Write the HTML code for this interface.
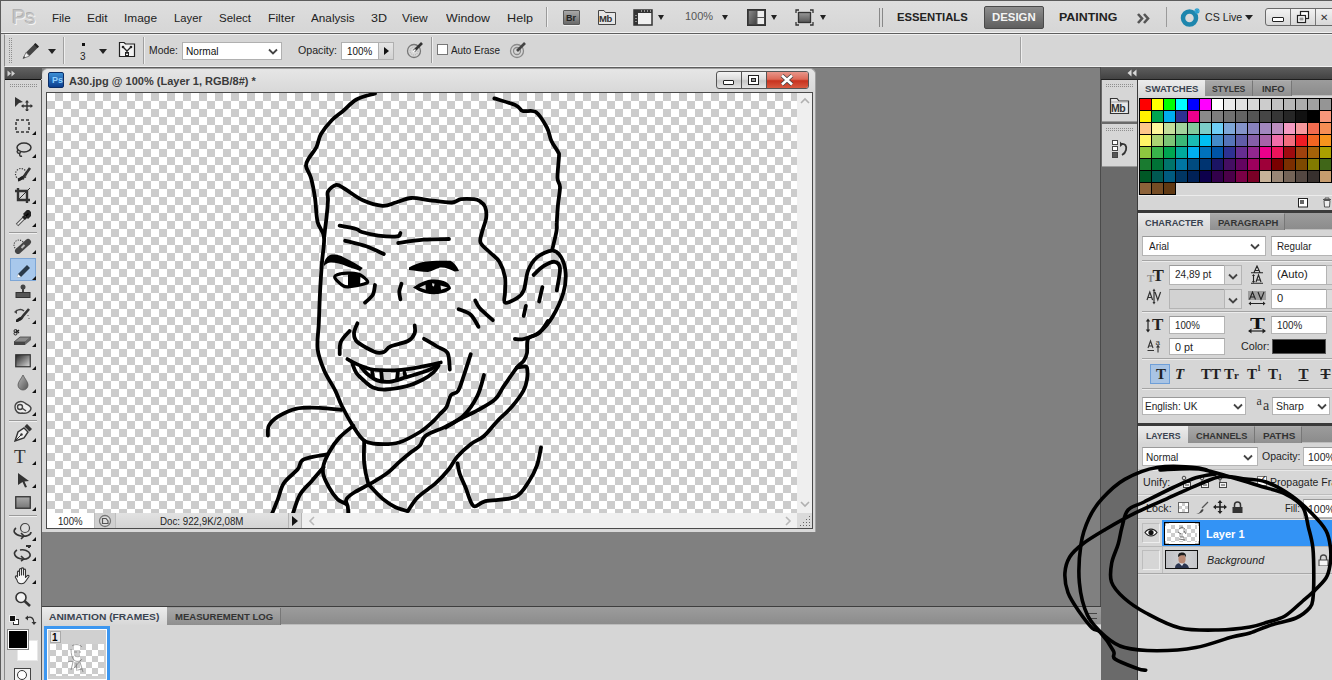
<!DOCTYPE html>
<html><head><meta charset="utf-8">
<style>
*{margin:0;padding:0;box-sizing:border-box}
html,body{width:1332px;height:680px;overflow:hidden;background:#d6d6d6;font-family:"Liberation Sans",sans-serif;color:#1e1e1e;position:relative}
.a{position:absolute}
.t{position:absolute;white-space:nowrap;font-size:11px;line-height:13px}
.b{font-weight:bold}
.chk{background:conic-gradient(#cccccc 0 25%,#ffffff 0 50%,#cccccc 0 75%,#ffffff 0) 0 0/16px 16px}
.inp{position:absolute;background:#fff;border:1px solid #a9a9a9;border-top-color:#8c8c8c}
.sep{position:absolute;background:#a8a8a8;width:1px}
.hsep{position:absolute;background:#a5a5a5;height:1px;border-bottom:1px solid #ececec;box-sizing:content-box}
.tab{position:absolute;font-weight:bold;font-size:10px;line-height:12px;white-space:nowrap;color:#3a3a3a}
</style></head><body>
<!-- frame -->
<div class="a" style="left:0;top:0;width:1332px;height:1px;background:#5c5c5c"></div>
<div class="a" style="left:0;top:0;width:1px;height:680px;background:#5c5c5c"></div>
<!-- menubar -->
<div class="a" id="menubar" style="left:1px;top:1px;width:1331px;height:32px;background:linear-gradient(#dedede,#d6d6d6);border-bottom:1px solid #f2f2f2"></div>
<div class="a" style="left:0;top:33px;width:1332px;height:1px;background:#5e5e5e"></div>
<!-- options bar -->
<div class="a" style="left:4px;top:34px;width:1328px;height:33px;background:#d6d6d6;border-left:1px solid #8a8a8a;border-top:1px solid #f0f0f0;border-bottom:1px solid #f0f0f0"></div>
<div class="a" style="left:0;top:67px;width:1332px;height:1px;background:#5e5e5e"></div>
<!-- workspace -->
<div class="a" id="ws" style="left:42px;top:68px;width:1059px;height:538px;background:#808080"></div>
<!-- toolbox -->
<div class="a" style="left:1px;top:67px;width:4px;height:613px;background:#d6d6d6"></div>
<div class="a" style="left:4px;top:67px;width:1px;height:613px;background:#8a8a8a"></div>
<div class="a" style="left:5px;top:67px;width:37px;height:12px;background:linear-gradient(#626262,#474747)"></div>
<div class="a" style="left:5px;top:79px;width:36px;height:601px;background:#d6d6d6;border-top:1px solid #111"></div>
<div class="a" style="left:41px;top:80px;width:1px;height:600px;background:#5a5a5a"></div>

<!-- document window -->
<div class="a" style="left:42px;top:68px;width:774px;height:464px;background:#d9d9d9;border-radius:6px 6px 0 0;border:1px solid #a0a0a0;border-bottom:none;border-left:none"></div>
<div class="a" style="left:43px;top:69px;width:772px;height:23px;background:linear-gradient(#e6e6e6,#d8d8d8);border-radius:6px 6px 0 0"></div>
<div class="a" style="left:48px;top:72px;width:16px;height:16px;background:linear-gradient(#3c8fd6,#0a3d8f);border-radius:2px;border:1px solid #0b2d66"></div>
<div class="t b" style="left:52px;top:74px;font-size:9px;color:#8fd0ff">Ps</div>
<div class="t b" id="title" style="left:69px;top:75px;font-size:11px;color:#3a3a3a">A30.jpg @ 100% (Layer 1, RGB/8#) *</div>
<div class="a" style="left:46px;top:92px;width:767px;height:437px;border:1px solid #4a4a4a;background:#f0f0f0"></div>
<div class="a chk" style="left:47px;top:93px;width:750px;height:420px"></div>
<!-- status bar -->
<div class="a" style="left:47px;top:513px;width:47px;height:15px;background:#fff"></div>

<div class="a" style="left:94px;top:513px;width:22px;height:15px;background:#d0d0d0;border-left:1px solid #bdbdbd;border-right:1px solid #bdbdbd"></div>
<div class="a" style="left:116px;top:513px;width:172px;height:15px;background:linear-gradient(#e2e2e2,#d4d4d4)"></div>

<div class="a" style="left:288px;top:513px;width:14px;height:15px;background:#d8d8d8;border-left:1px solid #b5b5b5;border-right:1px solid #b5b5b5"></div>
<div class="a" style="left:292px;top:516px;width:0;height:0;border-left:6px solid #111;border-top:5px solid transparent;border-bottom:5px solid transparent"></div>
<div class="a" style="left:797px;top:93px;width:15px;height:420px;background:#efefef"></div>
<div class="a" style="left:797px;top:513px;width:15px;height:15px;background:#dadada"></div>
<div class="t" style="left:12px;top:5px;font-size:21px;color:#c2c2c2;line-height:24px;letter-spacing:-1px;text-shadow:1px 1px 0 #f4f4f4,-1px -1px 0 #b0b0b0">Ps</div>
<div class="t" style="left:52px;top:12px;font-size:11.5px;line-height:13px;transform-origin:0 0;transform:scaleX(1.0037);color:#222">File</div>
<div class="t" style="left:86.5px;top:12px;font-size:11.5px;line-height:13px;transform-origin:0 0;transform:scaleX(1.0389);color:#222">Edit</div>
<div class="t" style="left:123.5px;top:12px;font-size:11.5px;line-height:13px;transform-origin:0 0;transform:scaleX(1.0323);color:#222">Image</div>
<div class="t" style="left:174px;top:12px;font-size:11.5px;line-height:13px;transform-origin:0 0;transform:scaleX(0.9798);color:#222">Layer</div>
<div class="t" style="left:218.5px;top:12px;font-size:11.5px;line-height:13px;transform-origin:0 0;transform:scaleX(1.0010);color:#222">Select</div>
<div class="t" style="left:267.5px;top:12px;font-size:11.5px;line-height:13px;transform-origin:0 0;transform:scaleX(1.0562);color:#222">Filter</div>
<div class="t" style="left:310.5px;top:12px;font-size:11.5px;line-height:13px;transform-origin:0 0;transform:scaleX(1.0204);color:#222">Analysis</div>
<div class="t" style="left:370.5px;top:12px;font-size:11.5px;line-height:13px;transform-origin:0 0;transform:scaleX(1.0882);color:#222">3D</div>
<div class="t" style="left:402px;top:12px;font-size:11.5px;line-height:13px;transform-origin:0 0;transform:scaleX(1.0397);color:#222">View</div>
<div class="t" style="left:445.5px;top:12px;font-size:11.5px;line-height:13px;transform-origin:0 0;transform:scaleX(1.0756);color:#222">Window</div>
<div class="t" style="left:506.5px;top:12px;font-size:11.5px;line-height:13px;transform-origin:0 0;transform:scaleX(1.0991);color:#222">Help</div>
<div class="a" style="left:546px;top:7px;width:1px;height:20px;background:#9a9a9a;border-right:1px solid #f0f0f0;box-sizing:content-box"></div>
<div class="a" style="left:563px;top:10px;width:17px;height:15px;background:linear-gradient(#a8a8a8,#6a6a6a);border:1px solid #5a5a5a;border-radius:1px;box-shadow:0 1px 0 #f0f0f0"></div>
<div class="t" style="left:566px;top:12px;font-size:9px;color:#222;font-weight:bold">Br</div>
<svg class="a" style="left:597px;top:8px" width="20" height="18"><path d="M1.5 16.5V2.5H7L8.5 4.5H18.5V16.5Z" fill="#e6e6e6" stroke="#444" stroke-width="1"/></svg>
<div class="t" style="left:599px;top:12px;font-size:9.5px;color:#333;font-weight:bold;letter-spacing:-0.5px">Mb</div>
<svg class="a" style="left:633px;top:9px" width="20" height="17"><rect x="1" y="1" width="18" height="15" fill="#f0f0f0" stroke="#333" stroke-width="1.5"/><rect x="1" y="1" width="18" height="3" fill="#333"/><rect x="1" y="1" width="4" height="15" fill="#333"/><path d="M3 6v1M3 9v1M3 12v1M8 2h1M11 2h1M14 2h1M17 2h1" stroke="#eee" stroke-width="1"/></svg>
<div class="a" style="left:658px;top:15px;width:0;height:0;border-top:5px solid #222;border-left:3.5px solid transparent;border-right:3.5px solid transparent"></div>
<div class="t" style="left:685px;top:10px;font-size:11px;color:#555;">100%</div>
<div class="a" style="left:722px;top:15px;width:0;height:0;border-top:5px solid #222;border-left:3.5px solid transparent;border-right:3.5px solid transparent"></div>
<svg class="a" style="left:747px;top:9px" width="19" height="17"><rect x="0.75" y="0.75" width="17.5" height="15.5" fill="#555" stroke="#333" stroke-width="1.5"/><rect x="2" y="2" width="7" height="13" fill="url(#gg)"/><rect x="10.5" y="2" width="6.5" height="6" fill="#eee"/><rect x="10.5" y="9" width="6.5" height="6" fill="#eee"/><defs><linearGradient id="gg" x1="0" y1="0" x2="1" y2="1"><stop offset="0" stop-color="#888"/><stop offset="1" stop-color="#444"/></linearGradient></defs></svg>
<div class="a" style="left:771px;top:15px;width:0;height:0;border-top:5px solid #222;border-left:3.5px solid transparent;border-right:3.5px solid transparent"></div>
<svg class="a" style="left:795px;top:9px" width="19" height="17"><path d="M1 4V1H4M15 1H18V4M18 13V16H15M4 16H1V13" fill="none" stroke="#333" stroke-width="1.3"/><rect x="3.5" y="3.5" width="12" height="10" fill="url(#g2)" stroke="#333" stroke-width="1.3"/><defs><linearGradient id="g2" x1="0" y1="0" x2="0" y2="1"><stop offset="0" stop-color="#999"/><stop offset="1" stop-color="#555"/></linearGradient></defs></svg>
<div class="a" style="left:820px;top:15px;width:0;height:0;border-top:5px solid #222;border-left:3.5px solid transparent;border-right:3.5px solid transparent"></div>
<div class="a" style="left:879px;top:8px;width:1px;height:19px;background:#888"></div>
<div class="a" style="left:882px;top:8px;width:1px;height:19px;background:#888"></div>
<div class="t" style="left:897px;top:11px;font-size:11px;font-weight:bold;line-height:13px;transform-origin:0 0;transform:scaleX(1.0235);color:#222">ESSENTIALS</div>
<div class="a" style="left:984px;top:6px;width:60px;height:23px;background:linear-gradient(#8e8e8e,#5e5e5e);border:1px solid #4a4a4a;border-radius:2px"></div>
<div class="t" style="left:992px;top:11px;font-size:11px;font-weight:bold;line-height:13px;transform-origin:0 0;transform:scaleX(1.0359);color:#f4f4f4">DESIGN</div>
<div class="t" style="left:1059px;top:11px;font-size:11px;font-weight:bold;line-height:13px;transform-origin:0 0;transform:scaleX(1.1266);color:#222">PAINTING</div>
<svg class="a" style="left:1137px;top:13px" width="15" height="11"><path d="M1 1L5 5.5L1 10M7 1L11 5.5L7 10" fill="none" stroke="#555" stroke-width="2.6"/></svg>
<div class="a" style="left:1166px;top:7px;width:1px;height:20px;background:#9a9a9a"></div>
<svg class="a" style="left:1180px;top:7px" width="22" height="20"><circle cx="9.5" cy="11" r="6.5" fill="none" stroke="#1e86ad" stroke-width="4.5"/><path d="M17 1V7M14 4H20M15 2L19 6M19 2L15 6" stroke="#2aa0d0" stroke-width="1.2"/></svg>
<div class="t" style="left:1205px;top:11px;font-size:11px;line-height:13px;transform-origin:0 0;transform:scaleX(0.9680);color:#222">CS Live</div>
<div class="a" style="left:1245px;top:15px;width:0;height:0;border-top:5px solid #222;border-left:4.0px solid transparent;border-right:4.0px solid transparent"></div>
<div class="a" style="left:1265px;top:8px;width:80px;height:18px;background:linear-gradient(#f2f2f2,#d8d8d8);border:1px solid #6a6a6a;border-radius:3px"></div>
<div class="a" style="left:1290px;top:9px;width:1px;height:16px;background:#777"></div>
<div class="a" style="left:1315px;top:9px;width:1px;height:16px;background:#777"></div>
<div class="a" style="left:1272px;top:17px;width:12px;height:5px;background:#fff;border:1px solid #222;border-radius:1px"></div>
<svg class="a" style="left:1296px;top:10px" width="14" height="14"><rect x="4.5" y="1.5" width="8" height="7" fill="#fff" stroke="#222" stroke-width="1.2"/><rect x="1.5" y="5.5" width="8" height="7" fill="#fff" stroke="#222" stroke-width="1.2"/><rect x="3.5" y="7.5" width="4" height="3" fill="#999"/></svg>
<div class="t" style="left:1320px;top:11px;font-size:10px;color:#333;">&#x2715;</div><svg class="a" style="left:9px;top:38px" width="4" height="25" fill="#8e8e8e" shape-rendering="crispEdges"><rect x="0" y="0" width="1" height="1"/><rect x="2" y="0" width="1" height="1"/><rect x="0" y="2" width="1" height="1"/><rect x="2" y="2" width="1" height="1"/><rect x="0" y="4" width="1" height="1"/><rect x="2" y="4" width="1" height="1"/><rect x="0" y="6" width="1" height="1"/><rect x="2" y="6" width="1" height="1"/><rect x="0" y="8" width="1" height="1"/><rect x="2" y="8" width="1" height="1"/><rect x="0" y="10" width="1" height="1"/><rect x="2" y="10" width="1" height="1"/><rect x="0" y="12" width="1" height="1"/><rect x="2" y="12" width="1" height="1"/><rect x="0" y="14" width="1" height="1"/><rect x="2" y="14" width="1" height="1"/><rect x="0" y="16" width="1" height="1"/><rect x="2" y="16" width="1" height="1"/><rect x="0" y="18" width="1" height="1"/><rect x="2" y="18" width="1" height="1"/><rect x="0" y="20" width="1" height="1"/><rect x="2" y="20" width="1" height="1"/><rect x="0" y="22" width="1" height="1"/><rect x="2" y="22" width="1" height="1"/><rect x="0" y="24" width="1" height="1"/><rect x="2" y="24" width="1" height="1"/></svg>
<svg class="a" style="left:21px;top:41px" width="19" height="18"><path d="M5 11.5 L14 2.5 L17.5 6 L8.5 15 Z" fill="#444"/><path d="M13 3.5 L14.5 2 L18 5.5 L16.5 7Z" fill="#222"/><path d="M5 11.5 L8.5 15 L2 17.5Z" fill="#f2f2f2" stroke="#666" stroke-width="0.8"/><path d="M2 17.5L3 15L4.5 16.5Z" fill="#444"/></svg>
<div class="a" style="left:48px;top:49px;width:0;height:0;border-top:5px solid #222;border-left:4.0px solid transparent;border-right:4.0px solid transparent"></div>
<div class="a" style="left:63px;top:37px;width:1px;height:27px;background:#a0a0a0;border-right:1px solid #eee;box-sizing:content-box"></div>
<div class="a" style="left:82px;top:43px;width:3px;height:3px;background:#111"></div>
<div class="t" style="left:80px;top:50px;font-size:10px;color:#222;">3</div>
<div class="a" style="left:99px;top:49px;width:0;height:0;border-top:5px solid #222;border-left:4.0px solid transparent;border-right:4.0px solid transparent"></div>
<svg class="a" style="left:118px;top:41px" width="18" height="17"><path d="M1.5 15.5V1.5H6L7.5 3H16.5V15.5Z" fill="#f2f2f2" stroke="#222" stroke-width="1.2"/><path d="M5 6L9 10L13 6M9 10V13" fill="none" stroke="#222" stroke-width="1.3"/><circle cx="5" cy="6" r="1.3" fill="#222"/><circle cx="13" cy="6" r="1.3" fill="#222"/><rect x="7.5" y="11.5" width="3" height="3" fill="none" stroke="#222"/></svg>
<div class="a" style="left:143px;top:37px;width:1px;height:27px;background:#a0a0a0;border-right:1px solid #eee;box-sizing:content-box"></div>
<div class="t" style="left:149px;top:44px;font-size:10.5px;line-height:13px;transform-origin:0 0;transform:scaleX(0.9867);color:#222">Mode:</div>
<div class="a" style="left:182px;top:42px;width:100px;height:18px;background:#fff;border:1px solid #b0b0b0"></div>
<div class="t" style="left:186px;top:45px;font-size:10.5px;line-height:13px;transform-origin:0 0;transform:scaleX(0.9633);color:#111">Normal</div>
<svg class="a" style="left:268px;top:48px" width="10" height="7"><path d="M1 1.5L5 5.5L9 1.5" fill="none" stroke="#444" stroke-width="1.8"/></svg>
<div class="t" style="left:297.5px;top:44px;font-size:10.5px;line-height:13px;transform-origin:0 0;transform:scaleX(1.0126);color:#222">Opacity:</div>
<div class="a" style="left:341px;top:42px;width:38px;height:18px;background:#fff;border:1px solid #b0b0b0"></div>
<div class="t" style="left:347px;top:45px;font-size:10.5px;line-height:13px;transform-origin:0 0;transform:scaleX(0.9382);color:#111">100%</div>
<div class="a" style="left:378px;top:42px;width:16px;height:18px;background:linear-gradient(#e6e6e6,#d2d2d2);border:1px solid #b0b0b0"></div>
<div class="a" style="left:384px;top:47px;width:0;height:0;border-left:5px solid #111;border-top:4px solid transparent;border-bottom:4px solid transparent"></div>
<svg class="a" style="left:406px;top:41px" width="20" height="18"><circle cx="8" cy="10" r="6.5" fill="#d8d8d8" stroke="#777" stroke-width="1.3"/><circle cx="8" cy="10" r="4" fill="none" stroke="#aaa" stroke-width="1" stroke-dasharray="1 1"/><path d="M8 10L16 2" stroke="#333" stroke-width="2.6"/><path d="M7 11L9.5 8.5" stroke="#fff" stroke-width="1.5"/></svg>
<div class="a" style="left:431px;top:37px;width:1px;height:26px;background:#9a9a9a;border-right:1px solid #eee;box-sizing:content-box"></div>
<div class="a" style="left:437px;top:44px;width:11px;height:11px;background:#fff;border:1px solid #777"></div>
<div class="t" style="left:451px;top:44px;font-size:10.5px;line-height:13px;transform-origin:0 0;transform:scaleX(0.9432);color:#222">Auto Erase</div>
<svg class="a" style="left:509px;top:41px" width="20" height="18"><circle cx="8" cy="10" r="6.5" fill="none" stroke="#8a8a8a" stroke-width="1.3"/><circle cx="8" cy="10" r="3.5" fill="none" stroke="#8a8a8a" stroke-width="1.3"/><path d="M8 10L16 2" stroke="#444" stroke-width="2.6"/></svg>
<div class="a" style="left:1020px;top:37px;width:1px;height:26px;background:#a0a0a0;border-right:1px solid #eee;box-sizing:content-box"></div><div class="a" style="left:12px;top:70px;width:12px;height:7px;background:none"></div>
<svg class="a" style="left:7px;top:70px" width="10" height="7"><path d="M0.5 0.5L4 3.5L0.5 6.5ZM4.5 0.5L8 3.5L4.5 6.5Z" fill="#d0d0d0"/></svg>
<svg class="a" style="left:10px;top:84px" width="28" height="4" fill="#8e8e8e" shape-rendering="crispEdges"><rect x="0" y="0" width="1" height="1"/><rect x="0" y="2" width="1" height="1"/><rect x="2" y="0" width="1" height="1"/><rect x="2" y="2" width="1" height="1"/><rect x="4" y="0" width="1" height="1"/><rect x="4" y="2" width="1" height="1"/><rect x="6" y="0" width="1" height="1"/><rect x="6" y="2" width="1" height="1"/><rect x="8" y="0" width="1" height="1"/><rect x="8" y="2" width="1" height="1"/><rect x="10" y="0" width="1" height="1"/><rect x="10" y="2" width="1" height="1"/><rect x="12" y="0" width="1" height="1"/><rect x="12" y="2" width="1" height="1"/><rect x="14" y="0" width="1" height="1"/><rect x="14" y="2" width="1" height="1"/><rect x="16" y="0" width="1" height="1"/><rect x="16" y="2" width="1" height="1"/><rect x="18" y="0" width="1" height="1"/><rect x="18" y="2" width="1" height="1"/><rect x="20" y="0" width="1" height="1"/><rect x="20" y="2" width="1" height="1"/><rect x="22" y="0" width="1" height="1"/><rect x="22" y="2" width="1" height="1"/><rect x="24" y="0" width="1" height="1"/><rect x="24" y="2" width="1" height="1"/><rect x="26" y="0" width="1" height="1"/><rect x="26" y="2" width="1" height="1"/></svg>
<svg class="a" style="left:14px;top:96px" width="19" height="15"><path d="M1 1L9 6L5 7L1 11Z" fill="#333"/><path d="M13 5V15M8 10H18" stroke="#333" stroke-width="1.4"/><path d="M13 4L11 6.5H15ZM13 16L11 13.5H15ZM7 10L9.5 8V12ZM19 10L16.5 8V12Z" fill="#333"/></svg>
<svg class="a" style="left:15px;top:119px" width="16" height="15"><rect x="1" y="1" width="13" height="12" fill="none" stroke="#333" stroke-width="1.5" stroke-dasharray="3 2"/></svg>
<div class="a" style="left:32px;top:131px;width:0;height:0;border-bottom:4px solid #111;border-left:4px solid transparent"></div>
<svg class="a" style="left:14px;top:141px" width="18" height="17"><ellipse cx="10" cy="6.5" rx="7" ry="4.5" fill="none" stroke="#333" stroke-width="1.5"/><path d="M4 9C2 11 4 13 6 12C5 14 6 16 8 15" fill="none" stroke="#333" stroke-width="1.4"/></svg>
<div class="a" style="left:32px;top:154px;width:0;height:0;border-bottom:4px solid #111;border-left:4px solid transparent"></div>
<svg class="a" style="left:14px;top:165px" width="18" height="17"><circle cx="7" cy="9" r="5.5" fill="none" stroke="#333" stroke-width="1.2" stroke-dasharray="1.3 1.3"/><path d="M6 14C8 14 10 12 11 10L16 3" stroke="#333" stroke-width="2.6"/><path d="M4 15C6 15 7 13 9 12" stroke="#222" stroke-width="3"/></svg>
<div class="a" style="left:32px;top:177px;width:0;height:0;border-bottom:4px solid #111;border-left:4px solid transparent"></div>
<svg class="a" style="left:14px;top:187px" width="18" height="17"><path d="M4 1V13H16M1 4H13V16" fill="none" stroke="#333" stroke-width="2.4"/><path d="M5 12L16 1" stroke="#333" stroke-width="1"/></svg>
<div class="a" style="left:32px;top:200px;width:0;height:0;border-bottom:4px solid #111;border-left:4px solid transparent"></div>
<svg class="a" style="left:15px;top:210px" width="16" height="17"><path d="M2 15L9 8" stroke="#555" stroke-width="3.5"/><path d="M2.5 14.5L8.5 8.5" stroke="#eee" stroke-width="1.5"/><path d="M8 6L11 9M9 5L13 1L16 4L12 8" stroke="#222" stroke-width="3"/></svg>
<div class="a" style="left:32px;top:223px;width:0;height:0;border-bottom:4px solid #111;border-left:4px solid transparent"></div>
<div class="a" style="left:9px;top:232px;width:28px;height:1px;background:#9a9a9a;border-bottom:1px solid #f0f0f0;box-sizing:content-box"></div>
<svg class="a" style="left:13px;top:238px" width="20" height="16"><circle cx="6" cy="7" r="5" fill="none" stroke="#444" stroke-width="1.1" stroke-dasharray="1.2 1.2"/><path d="M5 13L15 4" stroke="#444" stroke-width="6" stroke-linecap="round"/><path d="M8.5 10L11.5 7" stroke="#bbb" stroke-width="2"/></svg>
<div class="a" style="left:32px;top:250px;width:0;height:0;border-bottom:4px solid #111;border-left:4px solid transparent"></div>
<div class="a" style="left:10px;top:258px;width:26px;height:23px;background:#a8c8ec;border:1px solid #7da6d6"></div>
<svg class="a" style="left:15px;top:261px" width="18" height="17"><path d="M3 13L12 4L15 7L6 16L2 16.5Z" fill="#2a3a4a"/><path d="M2 16.5L3 13L6 16Z" fill="#fff"/></svg>
<div class="a" style="left:32px;top:276px;width:0;height:0;border-bottom:4px solid #111;border-left:4px solid transparent"></div>
<svg class="a" style="left:14px;top:284px" width="18" height="15"><circle cx="9" cy="3" r="2.5" fill="#444"/><rect x="8" y="4" width="2" height="5" fill="#444"/><rect x="2" y="8.5" width="14" height="5" fill="#555" stroke="#333"/></svg>
<div class="a" style="left:32px;top:297px;width:0;height:0;border-bottom:4px solid #111;border-left:4px solid transparent"></div>
<svg class="a" style="left:13px;top:307px" width="20" height="15"><path d="M3 4C6 2 9 2 11 4" fill="none" stroke="#444" stroke-width="1.5"/><path d="M1 5L4 2.5V7Z" fill="#444"/><path d="M5 13C7 13 9 11 10 9L16 2" stroke="#333" stroke-width="2.6"/><path d="M3 14C5 14 6 12 8 11" stroke="#222" stroke-width="3"/><path d="M15 8V9M16 11V12" stroke="#555"/></svg>
<div class="a" style="left:32px;top:320px;width:0;height:0;border-bottom:4px solid #111;border-left:4px solid transparent"></div>
<svg class="a" style="left:13px;top:329px" width="20" height="17"><path d="M3 4L6 1M3 1L6 4" stroke="#222" stroke-width="1.2"/><circle cx="2.5" cy="2" r="1.5" fill="none" stroke="#222"/><circle cx="2.5" cy="4.5" r="1.5" fill="none" stroke="#222"/><path d="M1 13L7 8H18L12 13Z" fill="#8a8a8a" stroke="#444" stroke-width="0.8"/><path d="M1 13H12V16H1Z" fill="#444"/><path d="M12 13L18 8V11L12 16Z" fill="#666"/></svg>
<div class="a" style="left:32px;top:343px;width:0;height:0;border-bottom:4px solid #111;border-left:4px solid transparent"></div>
<svg class="a" style="left:15px;top:354px" width="16" height="14"><defs><linearGradient id="tg" x1="0" y1="0" x2="1" y2="1"><stop offset="0" stop-color="#222"/><stop offset="1" stop-color="#ddd"/></linearGradient></defs><rect x="0.75" y="0.75" width="14.5" height="12" fill="url(#tg)" stroke="#333" stroke-width="1.2"/></svg>
<div class="a" style="left:32px;top:366px;width:0;height:0;border-bottom:4px solid #111;border-left:4px solid transparent"></div>
<svg class="a" style="left:17px;top:374px" width="12" height="17"><defs><linearGradient id="td" x1="0" y1="0" x2="1" y2="1"><stop offset="0" stop-color="#bbb"/><stop offset="1" stop-color="#555"/></linearGradient></defs><path d="M6 1C4 5 1 8 1 11A5 5 0 0 0 11 11C11 8 8 5 6 1Z" fill="url(#td)" stroke="#555" stroke-width="0.8"/></svg>
<div class="a" style="left:32px;top:389px;width:0;height:0;border-bottom:4px solid #111;border-left:4px solid transparent"></div>
<svg class="a" style="left:13px;top:399px" width="20" height="17"><path d="M2 8C2 3 8 1 12 4C14 6 17 6 18 9C18 13 13 15 9 14C5 15 2 12 2 8Z" fill="#eee" stroke="#444" stroke-width="1.4"/><circle cx="7" cy="8" r="2.5" fill="none" stroke="#444" stroke-width="1.4"/><path d="M9 9L13 12" stroke="#444" stroke-width="1.4"/></svg>
<div class="a" style="left:32px;top:412px;width:0;height:0;border-bottom:4px solid #111;border-left:4px solid transparent"></div>
<div class="a" style="left:9px;top:420px;width:28px;height:1px;background:#9a9a9a;border-bottom:1px solid #f0f0f0;box-sizing:content-box"></div>
<svg class="a" style="left:14px;top:424px" width="18" height="18"><path d="M1 17L4 8L10 4L14 8L10 14Z" fill="#eee" stroke="#333" stroke-width="1.4"/><path d="M1 17L7 11" stroke="#333"/><circle cx="7.5" cy="10.5" r="1.2" fill="#333"/><path d="M11 3L13 1L17 5L15 7" fill="#333" stroke="#333" stroke-width="1.5"/></svg>
<div class="a" style="left:32px;top:438px;width:0;height:0;border-bottom:4px solid #111;border-left:4px solid transparent"></div>
<div class="t" style="left:14px;top:447px;font-family:'Liberation Serif',serif;font-size:19px;line-height:19px;color:#333">T</div>
<div class="a" style="left:32px;top:461px;width:0;height:0;border-bottom:4px solid #111;border-left:4px solid transparent"></div>
<svg class="a" style="left:17px;top:472px" width="13" height="16"><path d="M1 1L12 9L7.5 9.5L10 15L8 15.5L5.5 10L1 13Z" fill="#333"/></svg>
<div class="a" style="left:32px;top:484px;width:0;height:0;border-bottom:4px solid #111;border-left:4px solid transparent"></div>
<svg class="a" style="left:15px;top:496px" width="16" height="13"><defs><linearGradient id="tr" x1="0" y1="0" x2="0" y2="1"><stop offset="0" stop-color="#aaa"/><stop offset="1" stop-color="#777"/></linearGradient></defs><rect x="0.75" y="0.75" width="14.5" height="11.5" fill="url(#tr)" stroke="#333" stroke-width="1.3"/></svg>
<div class="a" style="left:32px;top:507px;width:0;height:0;border-bottom:4px solid #111;border-left:4px solid transparent"></div>
<div class="a" style="left:9px;top:515px;width:28px;height:1px;background:#9a9a9a;border-bottom:1px solid #f0f0f0;box-sizing:content-box"></div>
<svg class="a" style="left:12px;top:522px" width="22" height="19"><circle cx="13" cy="6" r="4.5" fill="#ddd" stroke="#444" stroke-width="1.2"/><path d="M4 6C0 9 3 13 9 14C14 15 19 13 19 10" fill="none" stroke="#333" stroke-width="1.6"/><path d="M9 11L12 14L9 17" fill="none" stroke="#333" stroke-width="1.6"/></svg>
<div class="a" style="left:32px;top:537px;width:0;height:0;border-bottom:4px solid #111;border-left:4px solid transparent"></div>
<svg class="a" style="left:12px;top:544px" width="22" height="18"><path d="M14 2H19M17 1V4" stroke="#333" stroke-width="2"/><path d="M5 6C0 9 3 14 10 15C15 16 19 13 18 10C17 7 12 5 8 6" fill="none" stroke="#333" stroke-width="1.6"/><path d="M9 12L12 15L9 17" fill="none" stroke="#333" stroke-width="1.6"/></svg>
<div class="a" style="left:32px;top:557px;width:0;height:0;border-bottom:4px solid #111;border-left:4px solid transparent"></div>
<svg class="a" style="left:13px;top:567px" width="20" height="18"><path d="M4.5 10V5C4.5 3.8 6.5 3.8 6.5 5V8.5V2.5C6.5 1.2 8.5 1.2 8.5 2.5V8V1.8C8.5 0.6 10.5 0.6 10.5 1.8V8V3C10.5 1.8 12.5 1.8 12.5 3V10.5L14 8.8C15 7.8 16.6 8.6 15.8 9.8L12.5 14.5C11.5 16 10.5 16.8 8.5 16.8C5.5 16.8 4.3 15 4 13L2.5 10.5C1.8 9.3 3.6 8.3 4.5 9.5Z" fill="#f6f6f6" stroke="#333" stroke-width="1.1" stroke-linejoin="round"/></svg>
<div class="a" style="left:32px;top:580px;width:0;height:0;border-bottom:4px solid #111;border-left:4px solid transparent"></div>
<svg class="a" style="left:14px;top:591px" width="18" height="16"><circle cx="7" cy="6.5" r="5" fill="#f2f2f2" stroke="#333" stroke-width="1.6"/><path d="M10.5 10L16 15" stroke="#333" stroke-width="2.6"/></svg>
<div class="a" style="left:13px;top:619px;width:6px;height:6px;background:#fff;border:1px solid #333"></div>
<div class="a" style="left:9px;top:615px;width:7px;height:7px;background:#111;border:1px solid #eee"></div>
<svg class="a" style="left:25px;top:614px" width="12" height="12"><path d="M2 4C6 2 9 4 9 9" fill="none" stroke="#333" stroke-width="1.3"/><path d="M0 4L3 1.5V6.5ZM9 11L6.5 8H11.5Z" fill="#333"/></svg>
<div class="a" style="left:17px;top:640px;width:21px;height:21px;background:#fff;border:1px solid #e8e8e8"></div>
<div class="a" style="left:8px;top:630px;width:20px;height:19px;background:#000;border:1px solid #fff;outline:1px solid #888"></div>
<div class="a" style="left:14px;top:668px;width:17px;height:13px;background:#f4f4f4;border:1px solid #444"></div>
<div class="a" style="left:17px;top:670px;width:10px;height:10px;border-radius:50%;border:1px solid #333;background:#fff"></div><div class="a" style="left:716px;top:71px;width:93px;height:18px;background:linear-gradient(#f4f4f4 0,#dcdcdc 45%,#c8c8c8 55%,#e4e4e4 100%);border:1px solid #555;border-radius:3px"></div>
<div class="a" style="left:766px;top:72px;width:42px;height:16px;background:linear-gradient(#e8968a 0,#dd6a58 45%,#c8321e 55%,#d85a40 100%);border-radius:0 2px 2px 0;border-left:1px solid #555"></div>
<div class="a" style="left:741px;top:72px;width:1px;height:16px;background:#555"></div>
<div class="a" style="left:723px;top:80px;width:11px;height:5px;background:#fff;border:1px solid #222;border-radius:1px"></div>
<div class="a" style="left:748px;top:75px;width:11px;height:10px;background:#fff;border:1px solid #222"></div>
<div class="a" style="left:751px;top:78px;width:5px;height:4px;background:#999;border:1px solid #222"></div>
<svg class="a" style="left:780px;top:74px" width="14" height="12"><path d="M2 1.5L12 10.5M12 1.5L2 10.5" stroke="#444" stroke-width="4.2"/><path d="M2 1.5L12 10.5M12 1.5L2 10.5" stroke="#fff" stroke-width="2.6"/></svg>
<svg class="a" style="left:800px;top:97px" width="10" height="7"><path d="M1 6L5 2L9 6" fill="none" stroke="#b0b0b0" stroke-width="1.6"/></svg>
<svg class="a" style="left:800px;top:501px" width="10" height="7"><path d="M1 1L5 5L9 1" fill="none" stroke="#b0b0b0" stroke-width="1.6"/></svg>
<svg class="a" style="left:308px;top:516px" width="7" height="10"><path d="M6 1L2 5L6 9" fill="none" stroke="#b8b8b8" stroke-width="1.6"/></svg>
<svg class="a" style="left:785px;top:516px" width="7" height="10"><path d="M1 1L5 5L1 9" fill="none" stroke="#b8b8b8" stroke-width="1.6"/></svg>
<div class="a" style="left:799px;top:515px;width:11px;height:11px;background-image:radial-gradient(#666 0.7px,transparent 0.9px);background-size:3px 3px;clip-path:polygon(100% 0,100% 100%,0 100%)"></div>
<div class="t" style="left:58px;top:515px;font-size:10.5px;line-height:13px;transform-origin:0 0;transform:scaleX(0.9159);color:#1e1e1e">100%</div>
<div class="t" style="left:160px;top:515px;font-size:10.5px;line-height:13px;transform-origin:0 0;transform:scaleX(0.9289);color:#1e1e1e">Doc: 922,9K/2,08M</div>
<svg class="a" style="left:98px;top:514px" width="14" height="14"><circle cx="7" cy="7" r="5.5" fill="#ddd" stroke="#777" stroke-width="1.3"/><path d="M4.5 4.5H8L10 7V9.5H4.5Z" fill="none" stroke="#555" stroke-width="1.2"/></svg>
<svg class="a" style="left:0;top:0" width="1332" height="680" viewBox="0 0 1332 680">
<defs><clipPath id="cv"><rect x="47" y="93" width="750" height="420"/></clipPath></defs>
<g clip-path="url(#cv)" fill="none" stroke="#000" stroke-width="3.8" stroke-linecap="round" stroke-linejoin="round">
<path d="M375.0 93.5 C371.9 94.5 361.8 96.6 356.5 99.5 C351.2 102.4 347.1 107.6 343.0 111.0 C338.9 114.4 335.7 116.2 332.0 120.0 C328.3 123.8 323.6 129.5 321.0 134.0 C318.4 138.5 318.5 143.0 316.5 147.0 C314.5 151.0 310.8 154.8 309.0 158.0 C307.2 161.2 305.7 162.7 306.0 166.0 C306.3 169.3 309.5 172.7 311.0 178.0 C312.5 183.3 313.9 190.7 315.0 198.0 C316.1 205.3 316.1 215.5 317.6 222.0 C319.1 228.5 323.3 230.3 324.0 237.0 C324.7 243.7 322.7 252.7 322.0 262.0 C321.3 271.3 320.5 282.8 320.0 293.0 C319.5 303.2 319.2 314.2 318.8 323.5 C318.4 332.8 316.7 341.1 317.6 349.0 C318.5 356.9 321.4 363.8 324.3 370.7 C327.2 377.6 332.4 384.7 335.3 390.6 C338.2 396.5 338.9 400.1 341.9 406.0 C344.8 411.9 349.3 420.2 353.0 426.0 C356.7 431.8 359.8 437.5 364.0 440.5 C368.2 443.5 372.2 443.7 378.0 444.0 C383.8 444.3 392.0 444.5 399.0 442.5 C406.0 440.5 414.3 435.5 420.0 432.0 C425.7 428.5 429.7 424.5 433.0 421.5 C436.3 418.5 437.8 416.4 440.0 414.0 C442.2 411.6 444.7 410.2 446.5 407.0 C448.3 403.8 449.1 397.7 451.0 395.0 C452.9 392.3 455.8 394.3 458.0 391.0 C460.2 387.7 461.9 381.1 464.0 375.0 C466.1 368.9 469.6 357.7 470.7 354.2"/>
<path d="M324.0 237.0 C324.4 233.8 325.8 223.8 326.5 217.6 C327.2 211.4 327.8 204.3 328.0 200.0 C328.2 195.7 326.6 194.0 328.0 191.5 C329.4 189.0 333.5 185.3 336.3 184.9 C339.1 184.5 340.6 186.4 345.0 189.0 C349.4 191.6 356.5 197.5 362.8 200.3 C369.1 203.1 377.2 205.4 382.7 205.8 C388.2 206.2 391.1 203.8 395.9 202.5 C400.7 201.2 405.6 198.4 411.3 198.0 C417.0 197.6 423.2 199.6 430.0 200.3 C436.8 201.1 446.9 202.7 452.0 202.5 C457.1 202.3 457.2 199.8 460.9 199.2 C464.6 198.6 470.9 198.9 474.0 199.2 C477.1 199.5 477.8 199.8 479.6 201.0 C481.4 202.2 483.9 203.8 485.0 206.6 C486.1 209.4 486.7 213.2 486.2 217.6 C485.7 222.0 482.7 228.8 481.8 233.0 C480.9 237.2 479.2 239.7 480.7 243.0 C482.2 246.3 487.5 249.9 490.6 253.0 C493.7 256.1 497.0 257.8 499.4 261.8 C501.8 265.8 504.1 272.1 505.0 277.2 C505.9 282.3 505.0 288.5 505.0 292.7 C505.0 296.9 503.0 301.7 505.0 302.6 C507.0 303.5 513.9 300.2 517.0 298.2 C520.1 296.2 521.9 295.0 523.7 290.4 C525.6 285.8 525.9 276.1 528.1 270.6 C530.3 265.1 533.0 260.7 537.0 257.4 C541.0 254.1 548.4 250.7 552.4 250.7 C556.4 250.7 559.0 253.7 561.2 257.4 C563.4 261.1 565.2 266.9 565.6 272.8 C566.0 278.7 565.6 285.4 563.4 292.7 C561.2 300.0 556.4 310.3 552.4 316.9 C548.4 323.5 543.9 328.7 539.1 332.4 C534.3 336.1 527.7 337.9 523.7 339.0 C519.7 340.1 516.4 339.0 514.9 339.0"/>
<path d="M494.4 98.4 C498.0 99.6 511.3 103.3 516.0 105.4 C520.7 107.5 519.4 109.9 522.7 111.0 C526.0 112.1 531.9 109.2 535.9 112.0 C539.9 114.8 544.3 122.7 546.9 127.5 C549.5 132.3 549.4 136.6 551.3 140.7 C553.1 144.8 556.7 149.2 558.0 151.8 C559.3 154.4 559.1 151.6 559.0 156.0 C558.9 160.4 557.3 172.8 557.5 178.0 C557.7 183.2 559.9 182.6 560.0 187.0 C560.1 191.4 558.5 198.8 558.0 204.7 C557.5 210.6 557.0 218.0 556.8 222.4 C556.5 226.8 557.2 226.6 556.5 231.0 C555.8 235.4 553.1 246.0 552.4 249.0"/>
<path d="M339.6 225.7 C342.4 226.2 352.5 227.9 356.2 229.0 C359.9 230.1 358.1 230.9 361.8 232.0 C365.5 233.1 372.3 234.9 378.2 235.6 C384.1 236.3 393.3 236.8 397.0 236.4 C400.7 236.0 399.8 233.6 400.4 233.0"/>
<path d="M345.2 240.8 C348.7 241.7 359.8 244.1 366.2 246.3 C372.6 248.5 380.9 252.7 383.8 254.0"/>
<path d="M398.2 243.0 C402.4 242.4 415.0 240.4 423.5 239.7 C432.0 239.0 444.8 239.1 449.0 239.0"/>
<path d="M375.0 285.0 C374.6 286.6 374.5 292.0 372.8 294.9 C371.1 297.8 366.3 301.3 365.0 302.6"/>
<path d="M401.5 283.8 C401.1 285.1 399.5 288.9 399.3 291.5 C399.1 294.1 400.2 298.0 400.4 299.3"/>
<path d="M357.4 323.3 C356.8 324.9 354.0 330.1 354.0 333.2 C354.0 336.3 353.9 338.9 357.4 342.0 C360.9 345.1 370.6 350.3 375.0 352.0 C379.4 353.7 381.2 352.9 383.8 352.0 C386.4 351.1 386.4 348.3 390.4 346.5 C394.4 344.7 403.9 343.2 408.0 341.0 C412.1 338.8 413.6 335.8 414.7 333.2 C415.8 330.6 414.7 326.8 414.7 325.5"/>
<path d="M349.6 331.0 C348.1 332.8 342.5 338.1 340.8 342.0 C339.1 345.9 339.9 352.2 339.7 354.2"/>
<path d="M424.0 338.8 C426.2 340.1 433.1 344.1 437.0 346.5 C440.9 348.9 445.5 349.1 447.6 353.0 C449.7 356.9 449.4 366.8 449.8 369.6"/>
<path d="M347.4 359.1 C348.9 359.9 352.8 362.4 356.5 364.0 C360.2 365.6 365.7 368.0 369.8 369.0 C373.9 370.0 376.6 370.0 381.3 370.2 C386.0 370.4 392.4 370.5 397.9 370.2 C403.4 369.9 408.9 369.1 414.4 368.2 C419.9 367.3 426.5 365.8 430.9 364.9 C435.3 363.9 439.1 362.9 440.8 362.5"/>
<path d="M352.4 364.0 C353.1 365.5 354.4 370.2 356.5 373.1 C358.6 376.0 362.1 379.0 364.8 381.4 C367.6 383.8 369.6 386.1 373.0 387.5 C376.4 388.9 380.0 389.7 385.5 389.5 C391.0 389.3 399.8 388.0 406.0 386.4 C412.2 384.8 418.0 382.1 422.6 379.8 C427.2 377.5 430.7 374.7 433.4 372.3 C436.1 369.9 437.7 366.6 438.6 365.5"/>
<path d="M360.7 366.5 C361.8 367.8 364.6 371.7 367.3 374.0 C370.1 376.3 373.5 379.1 377.2 380.4 C380.9 381.7 384.8 382.3 389.6 381.8 C394.4 381.3 400.5 378.9 406.0 377.3 C411.5 375.7 418.4 373.7 422.6 372.3 C426.8 370.9 428.4 370.2 431.0 369.0 C433.6 367.8 436.8 365.7 438.0 365.0"/>
<path d="M372.2 371.5 L373.0 377.3"/>
<path d="M381.3 372.3 L382.1 381.0"/>
<path d="M397.9 371.5 L397.0 379.8"/>
<path d="M404.5 372.3 L405.3 376.4"/>
<path d="M475.2 300.4 C475.9 301.7 476.7 304.7 479.6 308.0 C482.5 311.3 490.6 318.2 492.8 320.2"/>
<path d="M458.6 309.2 C460.6 310.1 467.4 311.8 470.7 314.7 C474.0 317.6 477.2 324.8 478.5 326.8"/>
<path d="M542.4 287.1 L539.1 301.5"/>
<path d="M525.9 305.9 L523.7 315.8"/>
<path d="M533.6 275.0 C535.2 273.5 540.0 268.4 543.5 266.2 C547.0 264.0 551.9 261.4 554.6 261.8 C557.4 262.2 559.6 263.6 560.0 268.4 C560.4 273.2 557.3 286.7 556.8 290.4"/>
<path d="M548.0 321.0 C546.5 323.0 542.4 330.2 539.1 333.2 C535.8 336.2 530.1 335.5 528.1 338.8 C526.1 342.1 527.7 349.3 527.0 353.0 C526.3 356.7 525.4 358.4 523.7 360.8 C522.0 363.2 520.3 363.2 517.0 367.4 C513.7 371.6 507.5 380.9 503.8 386.2 C500.1 391.5 499.4 395.4 495.0 399.4 C490.6 403.4 483.3 407.1 477.4 410.4 C471.5 413.7 465.0 416.4 459.7 419.3 C454.4 422.2 448.0 426.2 445.7 427.6"/>
<path d="M484.0 375.0 C482.9 378.5 480.8 389.1 477.4 395.9 C474.0 402.7 468.8 410.6 463.5 415.7 C458.2 420.8 452.0 423.3 445.7 426.6 C439.4 429.9 430.1 432.5 425.8 435.6 C421.5 438.8 422.2 442.9 419.9 445.5 C417.6 448.1 415.2 448.9 411.9 451.5 C408.6 454.1 404.1 457.8 400.0 461.4 C395.9 465.0 391.8 469.7 387.0 473.3 C382.2 476.9 376.5 480.1 371.2 483.2 C365.9 486.3 359.1 489.4 355.0 492.0 C350.9 494.6 347.9 497.0 346.5 499.0 C345.1 501.0 346.8 503.2 346.8 504.0"/>
<path d="M517.0 367.4 C518.2 367.2 522.3 366.4 524.0 366.5 C525.7 366.6 526.5 365.8 527.0 368.0 C527.5 370.2 527.6 375.7 527.0 379.5 C526.4 383.3 526.0 386.1 523.5 390.6 C521.0 395.1 516.4 401.4 512.0 406.5 C507.6 411.6 501.7 416.6 497.0 421.5 C492.3 426.4 488.3 432.2 484.0 436.0 C479.7 439.8 475.4 440.6 471.0 444.0 C466.6 447.4 461.0 452.5 457.3 456.7 C453.6 460.9 452.6 464.6 449.0 469.0 C445.4 473.4 440.9 478.5 435.7 483.2 C430.5 487.9 422.5 492.5 417.9 497.1 C413.3 501.7 409.6 508.7 407.9 511.0"/>
<path d="M457.6 463.4 C457.9 465.0 458.3 469.3 459.6 473.3 C460.9 477.3 463.2 481.8 465.5 487.2 C467.8 492.6 470.2 503.7 473.5 506.0 C476.8 508.3 478.5 502.6 485.4 501.1 C492.3 499.6 507.8 500.4 515.1 497.1 C522.4 493.8 525.4 486.5 529.0 481.2 C532.6 475.9 535.0 471.0 537.0 465.4 C539.0 459.8 540.3 450.5 541.0 447.5"/>
<path d="M267.9 435.6 C268.1 434.0 267.2 428.9 268.9 425.7 C270.6 422.5 273.4 419.5 277.9 416.7 C282.4 413.9 288.8 410.3 295.7 408.8 C302.6 407.3 312.0 407.6 319.6 407.8 C327.2 408.0 337.8 409.5 341.4 409.8"/>
<path d="M353.3 425.7 C351.0 427.7 343.4 433.3 339.4 437.6 C335.4 441.9 332.1 446.9 329.5 451.5 C326.9 456.1 324.5 461.4 323.5 465.4 C322.5 469.4 322.5 471.5 323.5 475.3 C324.5 479.1 327.2 484.2 329.5 488.2 C331.8 492.2 335.0 496.6 337.4 499.1 C339.8 501.6 342.3 501.9 344.0 503.0 C345.7 504.1 346.8 503.7 347.5 505.5 C348.2 507.3 348.2 512.6 348.3 514.0"/>
<path d="M327.5 454.4 C323.5 455.2 308.7 456.9 303.7 459.4 C298.7 461.9 301.0 465.3 297.7 469.3 C294.4 473.3 287.1 478.2 283.8 483.2 C280.5 488.2 279.9 494.0 277.9 499.1 C275.9 504.2 272.9 511.5 271.9 514.0"/>
<path d="M323.5 467.3 C321.5 469.6 315.6 476.6 311.6 481.2 C307.6 485.8 302.8 489.6 299.7 495.1 C296.6 500.6 293.9 510.9 292.8 514.0"/>
<path d="M364.2 441.0 C364.2 444.7 363.5 456.4 364.2 463.4 C364.9 470.4 367.0 479.2 368.2 483.2 C369.4 487.2 368.7 484.5 371.2 487.2 C373.7 489.9 379.1 495.8 383.1 499.1 C387.1 502.4 391.0 505.0 395.0 507.0 C399.0 509.0 404.9 510.3 406.9 511.0"/>
<path d="M334.7 277.4 C334.2 275.4 337.9 274.5 340.6 273.8 C343.3 273.1 347.6 273.0 350.9 273.2 C354.2 273.4 357.6 273.6 360.4 275.0 C363.2 276.4 367.0 279.9 367.6 281.4 C368.2 282.9 366.7 283.2 364.0 284.0 C361.3 284.8 355.0 286.1 351.6 286.4 C348.2 286.7 346.3 287.5 343.5 286.0 C340.7 284.5 335.2 279.4 334.7 277.4Z" stroke-width="3.2"/>
</g>
<g clip-path="url(#cv)" fill="#000">
<path d="M324 265 C324 260 327 256.5 330 255 C334 254 339 254.5 344 257.5 C351 261 357 264 362.8 268 L360 271 C355 269 350 267.5 346 266 C341 264 336 262.5 331 262.5 C328 262.5 326 264 324 266 Z"/>
<path d="M409 267.5 C413 265 418 263 425 261.5 C432 260.5 442 260.5 450.5 260.8 C454 263 457 266 459 271 L454.5 271.5 C450 269 445 267 440 267.5 C436 268.5 433 271 428 272 C422 272 415 270.5 409 270 Z"/>
<path d="M413 287.5 C417 284.5 422 281.5 428 280 C436 279 442 280 446 282 C449 284 451 286.5 451 288.5 C449 291 445 293 438 294 C430 294.5 424 293.5 419 291 Z"/>
<path d="M348 274.5 C352 273.5 357 273.5 360.5 275.5 L360 285 C356 286.5 351 286.5 348 286 Z"/><path d="M419.5 287.5L425.5 284.8L425.8 289.8Z" fill="#d8d8d8"/><path d="M440.5 285.5L447.5 287.5L441 289.8Z" fill="#e4e4e4"/><path d="M432 283.2L434.5 283.8L434 286.5L432.5 286Z" fill="#ddd"/>
</g>
</svg>
<div class="a" style="left:1100px;top:67px;width:1px;height:613px;background:#4a4a4a"></div>
<div class="a" style="left:1101px;top:67px;width:231px;height:12px;background:linear-gradient(#5e5e5e,#424242)"></div>
<div class="a" style="left:1101px;top:79px;width:231px;height:1px;background:#1e1e1e"></div>
<svg class="a" style="left:1127px;top:69px" width="10" height="8"><path d="M4.5 0.5L0.5 4L4.5 7.5ZM9.5 0.5L5.5 4L9.5 7.5Z" fill="#d8d8d8"/></svg>
<div class="a" style="left:1101px;top:80px;width:37px;height:600px;background:#6a6a6a"></div>
<div class="a" style="left:1102px;top:80px;width:35px;height:42px;background:#d6d6d6;border-bottom:1px solid #9a9a9a"></div>
<div class="a" style="left:1102px;top:124px;width:35px;height:43px;background:#d6d6d6;border-bottom:1px solid #9a9a9a"></div>
<svg class="a" style="left:1106px;top:84px" width="28" height="4" fill="#8e8e8e" shape-rendering="crispEdges"><rect x="0" y="0" width="1" height="1"/><rect x="0" y="2" width="1" height="1"/><rect x="2" y="0" width="1" height="1"/><rect x="2" y="2" width="1" height="1"/><rect x="4" y="0" width="1" height="1"/><rect x="4" y="2" width="1" height="1"/><rect x="6" y="0" width="1" height="1"/><rect x="6" y="2" width="1" height="1"/><rect x="8" y="0" width="1" height="1"/><rect x="8" y="2" width="1" height="1"/><rect x="10" y="0" width="1" height="1"/><rect x="10" y="2" width="1" height="1"/><rect x="12" y="0" width="1" height="1"/><rect x="12" y="2" width="1" height="1"/><rect x="14" y="0" width="1" height="1"/><rect x="14" y="2" width="1" height="1"/><rect x="16" y="0" width="1" height="1"/><rect x="16" y="2" width="1" height="1"/><rect x="18" y="0" width="1" height="1"/><rect x="18" y="2" width="1" height="1"/><rect x="20" y="0" width="1" height="1"/><rect x="20" y="2" width="1" height="1"/><rect x="22" y="0" width="1" height="1"/><rect x="22" y="2" width="1" height="1"/><rect x="24" y="0" width="1" height="1"/><rect x="24" y="2" width="1" height="1"/><rect x="26" y="0" width="1" height="1"/><rect x="26" y="2" width="1" height="1"/></svg>
<svg class="a" style="left:1106px;top:128px" width="28" height="4" fill="#8e8e8e" shape-rendering="crispEdges"><rect x="0" y="0" width="1" height="1"/><rect x="0" y="2" width="1" height="1"/><rect x="2" y="0" width="1" height="1"/><rect x="2" y="2" width="1" height="1"/><rect x="4" y="0" width="1" height="1"/><rect x="4" y="2" width="1" height="1"/><rect x="6" y="0" width="1" height="1"/><rect x="6" y="2" width="1" height="1"/><rect x="8" y="0" width="1" height="1"/><rect x="8" y="2" width="1" height="1"/><rect x="10" y="0" width="1" height="1"/><rect x="10" y="2" width="1" height="1"/><rect x="12" y="0" width="1" height="1"/><rect x="12" y="2" width="1" height="1"/><rect x="14" y="0" width="1" height="1"/><rect x="14" y="2" width="1" height="1"/><rect x="16" y="0" width="1" height="1"/><rect x="16" y="2" width="1" height="1"/><rect x="18" y="0" width="1" height="1"/><rect x="18" y="2" width="1" height="1"/><rect x="20" y="0" width="1" height="1"/><rect x="20" y="2" width="1" height="1"/><rect x="22" y="0" width="1" height="1"/><rect x="22" y="2" width="1" height="1"/><rect x="24" y="0" width="1" height="1"/><rect x="24" y="2" width="1" height="1"/><rect x="26" y="0" width="1" height="1"/><rect x="26" y="2" width="1" height="1"/></svg>
<svg class="a" style="left:1109px;top:96px" width="21" height="19"><path d="M1.5 17.5V2.5H8L10 5H19.5V17.5Z" fill="#e8e8e8" stroke="#333" stroke-width="1.2"/><path d="M2 6H19" stroke="#aaa"/></svg>
<div class="t" style="left:1111px;top:102px;font-size:10.5px;font-weight:bold;color:#333;letter-spacing:-0.5px">Mb</div>
<svg class="a" style="left:1112px;top:140px" width="18" height="18"><rect x="0.5" y="0.5" width="5" height="4" fill="#fff" stroke="#444"/><rect x="0.5" y="6.5" width="5" height="4" fill="#fff" stroke="#444"/><rect x="0.5" y="12.5" width="5" height="5" fill="#555" stroke="#444"/><path d="M9 4C13 3 15 6 14 10C13.5 12 12 14 10 15" fill="none" stroke="#333" stroke-width="1.8"/><path d="M8 1.5L11 4.5L8 7Z" fill="#333"/></svg>
<div class="a" style="left:1137px;top:80px;width:1px;height:600px;background:#3c3c3c"></div>
<div class="a" style="left:1138px;top:80px;width:194px;height:600px;background:#d6d6d6"></div>
<div class="a" style="left:1138px;top:80px;width:194px;height:16px;background:linear-gradient(#9c9c9c,#8c8c8c);border-bottom:1px solid #bcbcbc"></div>
<div class="a" style="left:1138px;top:80px;width:67px;height:17px;background:linear-gradient(#ececec,#d6d6d6)"></div>
<div class="t" style="left:1145px;top:83px;font-size:9.5px;font-weight:bold;line-height:12px;transform-origin:0 0;transform:scaleX(1.0068);color:#3a4350">SWATCHES</div>
<div class="a" style="left:1205px;top:80px;width:48px;height:16px;background:linear-gradient(#a8a8a8,#8f8f8f);border-right:1px solid #777;border-top:1px solid #b0b0b0"></div>
<div class="t" style="left:1212px;top:83px;font-size:9.5px;font-weight:bold;line-height:12px;transform-origin:0 0;transform:scaleX(0.9011);color:#333">STYLES</div>
<div class="a" style="left:1253px;top:80px;width:39px;height:16px;background:linear-gradient(#a8a8a8,#8f8f8f);border-right:1px solid #777;border-top:1px solid #b0b0b0"></div>
<div class="t" style="left:1261.6px;top:83px;font-size:9.5px;font-weight:bold;line-height:12px;transform-origin:0 0;transform:scaleX(0.9911);color:#333">INFO</div>
<div class="a" style="left:1139px;top:98px;width:193px;height:85px;background:#000"></div>
<div class="a" style="left:1139px;top:182px;width:37px;height:13px;background:#000"></div>
<div class="a" style="left:1140px;top:99px;width:11px;height:11px;background:#ff0000"></div>
<div class="a" style="left:1152px;top:99px;width:11px;height:11px;background:#ffff00"></div>
<div class="a" style="left:1164px;top:99px;width:11px;height:11px;background:#00ff00"></div>
<div class="a" style="left:1176px;top:99px;width:11px;height:11px;background:#00ffff"></div>
<div class="a" style="left:1188px;top:99px;width:11px;height:11px;background:#0000ff"></div>
<div class="a" style="left:1200px;top:99px;width:11px;height:11px;background:#ff00ff"></div>
<div class="a" style="left:1212px;top:99px;width:11px;height:11px;background:#ffffff"></div>
<div class="a" style="left:1224px;top:99px;width:11px;height:11px;background:#ebebeb"></div>
<div class="a" style="left:1236px;top:99px;width:11px;height:11px;background:#e1e1e1"></div>
<div class="a" style="left:1248px;top:99px;width:11px;height:11px;background:#d7d7d7"></div>
<div class="a" style="left:1260px;top:99px;width:11px;height:11px;background:#cccccc"></div>
<div class="a" style="left:1272px;top:99px;width:11px;height:11px;background:#c2c2c2"></div>
<div class="a" style="left:1284px;top:99px;width:11px;height:11px;background:#b7b7b7"></div>
<div class="a" style="left:1296px;top:99px;width:11px;height:11px;background:#acacac"></div>
<div class="a" style="left:1308px;top:99px;width:11px;height:11px;background:#a1a1a1"></div>
<div class="a" style="left:1320px;top:99px;width:11px;height:11px;background:#959595"></div>
<div class="a" style="left:1140px;top:111px;width:11px;height:11px;background:#fff200"></div>
<div class="a" style="left:1152px;top:111px;width:11px;height:11px;background:#00a651"></div>
<div class="a" style="left:1164px;top:111px;width:11px;height:11px;background:#00aeef"></div>
<div class="a" style="left:1176px;top:111px;width:11px;height:11px;background:#2e3192"></div>
<div class="a" style="left:1188px;top:111px;width:11px;height:11px;background:#ec008c"></div>
<div class="a" style="left:1200px;top:111px;width:11px;height:11px;background:#8a8a8a"></div>
<div class="a" style="left:1212px;top:111px;width:11px;height:11px;background:#7d7d7d"></div>
<div class="a" style="left:1224px;top:111px;width:11px;height:11px;background:#707070"></div>
<div class="a" style="left:1236px;top:111px;width:11px;height:11px;background:#636363"></div>
<div class="a" style="left:1248px;top:111px;width:11px;height:11px;background:#555555"></div>
<div class="a" style="left:1260px;top:111px;width:11px;height:11px;background:#464646"></div>
<div class="a" style="left:1272px;top:111px;width:11px;height:11px;background:#363636"></div>
<div class="a" style="left:1284px;top:111px;width:11px;height:11px;background:#262626"></div>
<div class="a" style="left:1296px;top:111px;width:11px;height:11px;background:#111111"></div>
<div class="a" style="left:1308px;top:111px;width:11px;height:11px;background:#000000"></div>
<div class="a" style="left:1320px;top:111px;width:11px;height:11px;background:#f7977a"></div>
<div class="a" style="left:1140px;top:123px;width:11px;height:11px;background:#fdc68a"></div>
<div class="a" style="left:1152px;top:123px;width:11px;height:11px;background:#fff79a"></div>
<div class="a" style="left:1164px;top:123px;width:11px;height:11px;background:#c4df9b"></div>
<div class="a" style="left:1176px;top:123px;width:11px;height:11px;background:#a2d39c"></div>
<div class="a" style="left:1188px;top:123px;width:11px;height:11px;background:#82ca9d"></div>
<div class="a" style="left:1200px;top:123px;width:11px;height:11px;background:#7bcdc8"></div>
<div class="a" style="left:1212px;top:123px;width:11px;height:11px;background:#6ecff6"></div>
<div class="a" style="left:1224px;top:123px;width:11px;height:11px;background:#7ea7d8"></div>
<div class="a" style="left:1236px;top:123px;width:11px;height:11px;background:#8493ca"></div>
<div class="a" style="left:1248px;top:123px;width:11px;height:11px;background:#8882be"></div>
<div class="a" style="left:1260px;top:123px;width:11px;height:11px;background:#a187be"></div>
<div class="a" style="left:1272px;top:123px;width:11px;height:11px;background:#bc8dbf"></div>
<div class="a" style="left:1284px;top:123px;width:11px;height:11px;background:#f49ac2"></div>
<div class="a" style="left:1296px;top:123px;width:11px;height:11px;background:#f6989d"></div>
<div class="a" style="left:1308px;top:123px;width:11px;height:11px;background:#f26c4f"></div>
<div class="a" style="left:1320px;top:123px;width:11px;height:11px;background:#f68e55"></div>
<div class="a" style="left:1140px;top:135px;width:11px;height:11px;background:#fff467"></div>
<div class="a" style="left:1152px;top:135px;width:11px;height:11px;background:#acd372"></div>
<div class="a" style="left:1164px;top:135px;width:11px;height:11px;background:#7cc576"></div>
<div class="a" style="left:1176px;top:135px;width:11px;height:11px;background:#3bb878"></div>
<div class="a" style="left:1188px;top:135px;width:11px;height:11px;background:#1abbb4"></div>
<div class="a" style="left:1200px;top:135px;width:11px;height:11px;background:#00bff3"></div>
<div class="a" style="left:1212px;top:135px;width:11px;height:11px;background:#438cca"></div>
<div class="a" style="left:1224px;top:135px;width:11px;height:11px;background:#5574b9"></div>
<div class="a" style="left:1236px;top:135px;width:11px;height:11px;background:#605ca8"></div>
<div class="a" style="left:1248px;top:135px;width:11px;height:11px;background:#855fa8"></div>
<div class="a" style="left:1260px;top:135px;width:11px;height:11px;background:#a763a8"></div>
<div class="a" style="left:1272px;top:135px;width:11px;height:11px;background:#f06ea9"></div>
<div class="a" style="left:1284px;top:135px;width:11px;height:11px;background:#f26d7d"></div>
<div class="a" style="left:1296px;top:135px;width:11px;height:11px;background:#ed1c24"></div>
<div class="a" style="left:1308px;top:135px;width:11px;height:11px;background:#f26522"></div>
<div class="a" style="left:1320px;top:135px;width:11px;height:11px;background:#f7941d"></div>
<div class="a" style="left:1140px;top:147px;width:11px;height:11px;background:#8dc73f"></div>
<div class="a" style="left:1152px;top:147px;width:11px;height:11px;background:#39b54a"></div>
<div class="a" style="left:1164px;top:147px;width:11px;height:11px;background:#00a651"></div>
<div class="a" style="left:1176px;top:147px;width:11px;height:11px;background:#00a99d"></div>
<div class="a" style="left:1188px;top:147px;width:11px;height:11px;background:#00aeef"></div>
<div class="a" style="left:1200px;top:147px;width:11px;height:11px;background:#0072bc"></div>
<div class="a" style="left:1212px;top:147px;width:11px;height:11px;background:#0054a6"></div>
<div class="a" style="left:1224px;top:147px;width:11px;height:11px;background:#2e3192"></div>
<div class="a" style="left:1236px;top:147px;width:11px;height:11px;background:#662d91"></div>
<div class="a" style="left:1248px;top:147px;width:11px;height:11px;background:#92278f"></div>
<div class="a" style="left:1260px;top:147px;width:11px;height:11px;background:#ec008c"></div>
<div class="a" style="left:1272px;top:147px;width:11px;height:11px;background:#ed145b"></div>
<div class="a" style="left:1284px;top:147px;width:11px;height:11px;background:#9e0b0f"></div>
<div class="a" style="left:1296px;top:147px;width:11px;height:11px;background:#a0410d"></div>
<div class="a" style="left:1308px;top:147px;width:11px;height:11px;background:#a36209"></div>
<div class="a" style="left:1320px;top:147px;width:11px;height:11px;background:#aba000"></div>
<div class="a" style="left:1140px;top:159px;width:11px;height:11px;background:#1a7b30"></div>
<div class="a" style="left:1152px;top:159px;width:11px;height:11px;background:#007236"></div>
<div class="a" style="left:1164px;top:159px;width:11px;height:11px;background:#00746b"></div>
<div class="a" style="left:1176px;top:159px;width:11px;height:11px;background:#0076a3"></div>
<div class="a" style="left:1188px;top:159px;width:11px;height:11px;background:#004b80"></div>
<div class="a" style="left:1200px;top:159px;width:11px;height:11px;background:#003471"></div>
<div class="a" style="left:1212px;top:159px;width:11px;height:11px;background:#1b1464"></div>
<div class="a" style="left:1224px;top:159px;width:11px;height:11px;background:#440e62"></div>
<div class="a" style="left:1236px;top:159px;width:11px;height:11px;background:#630460"></div>
<div class="a" style="left:1248px;top:159px;width:11px;height:11px;background:#9e005d"></div>
<div class="a" style="left:1260px;top:159px;width:11px;height:11px;background:#9e0039"></div>
<div class="a" style="left:1272px;top:159px;width:11px;height:11px;background:#790000"></div>
<div class="a" style="left:1284px;top:159px;width:11px;height:11px;background:#7b2e00"></div>
<div class="a" style="left:1296px;top:159px;width:11px;height:11px;background:#7d4900"></div>
<div class="a" style="left:1308px;top:159px;width:11px;height:11px;background:#827b00"></div>
<div class="a" style="left:1320px;top:159px;width:11px;height:11px;background:#406618"></div>
<div class="a" style="left:1140px;top:171px;width:11px;height:11px;background:#005826"></div>
<div class="a" style="left:1152px;top:171px;width:11px;height:11px;background:#005952"></div>
<div class="a" style="left:1164px;top:171px;width:11px;height:11px;background:#005b7f"></div>
<div class="a" style="left:1176px;top:171px;width:11px;height:11px;background:#003663"></div>
<div class="a" style="left:1188px;top:171px;width:11px;height:11px;background:#002157"></div>
<div class="a" style="left:1200px;top:171px;width:11px;height:11px;background:#0d004c"></div>
<div class="a" style="left:1212px;top:171px;width:11px;height:11px;background:#32004b"></div>
<div class="a" style="left:1224px;top:171px;width:11px;height:11px;background:#4b0049"></div>
<div class="a" style="left:1236px;top:171px;width:11px;height:11px;background:#7b0046"></div>
<div class="a" style="left:1248px;top:171px;width:11px;height:11px;background:#7a0026"></div>
<div class="a" style="left:1260px;top:171px;width:11px;height:11px;background:#c7b299"></div>
<div class="a" style="left:1272px;top:171px;width:11px;height:11px;background:#998675"></div>
<div class="a" style="left:1284px;top:171px;width:11px;height:11px;background:#736357"></div>
<div class="a" style="left:1296px;top:171px;width:11px;height:11px;background:#534741"></div>
<div class="a" style="left:1308px;top:171px;width:11px;height:11px;background:#37302d"></div>
<div class="a" style="left:1320px;top:171px;width:11px;height:11px;background:#c69c6e"></div>
<div class="a" style="left:1140px;top:183px;width:11px;height:11px;background:#8c6239"></div>
<div class="a" style="left:1152px;top:183px;width:11px;height:11px;background:#754c24"></div>
<div class="a" style="left:1164px;top:183px;width:11px;height:11px;background:#603913"></div>
<div class="a" style="left:1138px;top:195px;width:194px;height:1px;background:#ececec"></div>
<div class="a" style="left:1138px;top:210px;width:194px;height:3px;background:#3a3a3a"></div>
<svg class="a" style="left:1298px;top:198px" width="11" height="10"><rect x="0.5" y="0.5" width="9" height="8.5" fill="#fff" stroke="#222"/><rect x="2" y="2" width="4" height="4" fill="#666"/></svg>
<svg class="a" style="left:1322px;top:197px" width="10" height="11"><path d="M1 2.5H9M3 2.5V1H7V2.5" fill="none" stroke="#555"/><path d="M2 3.5H8L7.5 10H2.5Z" fill="#eee" stroke="#555"/></svg>
<div class="a" style="left:1138px;top:213px;width:194px;height:17px;background:linear-gradient(#9c9c9c,#8c8c8c);border-bottom:1px solid #bcbcbc"></div>
<div class="a" style="left:1138px;top:213px;width:72px;height:18px;background:linear-gradient(#ececec,#d6d6d6)"></div>
<div class="t" style="left:1145px;top:217px;font-size:9.5px;font-weight:bold;line-height:12px;transform-origin:0 0;transform:scaleX(0.9706);color:#3a4350">CHARACTER</div>
<div class="a" style="left:1210px;top:213px;width:75px;height:17px;background:linear-gradient(#a8a8a8,#8f8f8f);border-right:1px solid #777;border-top:1px solid #b0b0b0"></div>
<div class="t" style="left:1217.6px;top:217px;font-size:9.5px;font-weight:bold;line-height:12px;transform-origin:0 0;transform:scaleX(0.9962);color:#333">PARAGRAPH</div>
<div class="a" style="left:1138px;top:423px;width:194px;height:3px;background:#3a3a3a"></div>
<div class="a" style="left:1138px;top:426px;width:194px;height:17px;background:linear-gradient(#9c9c9c,#8c8c8c);border-bottom:1px solid #bcbcbc"></div>
<div class="a" style="left:1138px;top:426px;width:50px;height:18px;background:linear-gradient(#ececec,#d6d6d6)"></div>
<div class="t" style="left:1145.6px;top:430px;font-size:9.5px;font-weight:bold;line-height:12px;transform-origin:0 0;transform:scaleX(0.9158);color:#3a4350">LAYERS</div>
<div class="a" style="left:1188px;top:426px;width:67px;height:17px;background:linear-gradient(#a8a8a8,#8f8f8f);border-right:1px solid #777;border-top:1px solid #b0b0b0"></div>
<div class="t" style="left:1195.6px;top:430px;font-size:9.5px;font-weight:bold;line-height:12px;transform-origin:0 0;transform:scaleX(0.9738);color:#333">CHANNELS</div>
<div class="a" style="left:1255px;top:426px;width:47px;height:17px;background:linear-gradient(#a8a8a8,#8f8f8f);border-right:1px solid #777;border-top:1px solid #b0b0b0"></div>
<div class="t" style="left:1263.3px;top:430px;font-size:9.5px;font-weight:bold;line-height:12px;transform-origin:0 0;transform:scaleX(1.0488);color:#333">PATHS</div><div class="a" style="left:1142px;top:236px;width:124px;height:20px;background:#fff;border:1px solid #b4b4b4;border-top-color:#9a9a9a"></div>
<div class="t" style="left:1148.5px;top:240px;font-size:10.5px;line-height:13px;transform-origin:0 0;transform:scaleX(0.9517);color:#1e1e1e">Arial</div>
<svg class="a" style="left:1250px;top:243px" width="10" height="7"><path d="M1 1.5 L5 5.5 L9 1.5" fill="none" stroke="#444" stroke-width="1.8"/></svg>
<div class="a" style="left:1271px;top:236px;width:70px;height:20px;background:#fff;border:1px solid #b4b4b4;border-top-color:#9a9a9a"></div>
<div class="t" style="left:1276.5px;top:240px;font-size:10.5px;line-height:13px;transform-origin:0 0;transform:scaleX(0.9380);color:#1e1e1e">Regular</div>
<div class="a" style="left:1142px;top:260px;width:190px;height:1px;background:#a4a4a4"></div><div class="a" style="left:1142px;top:261px;width:190px;height:1px;background:#ececec"></div>
<div class="a" style="left:1169px;top:265px;width:56px;height:20px;background:#fff;border:1px solid #b4b4b4;border-top-color:#9a9a9a"></div>
<div class="t" style="left:1174.5px;top:268px;font-size:10.5px;line-height:13px;transform-origin:0 0;transform:scaleX(0.9538);color:#1e1e1e">24,89 pt</div>
<div class="a" style="left:1224px;top:265px;width:18px;height:20px;background:#dcdcdc;border:1px solid #b4b4b4"></div>
<svg class="a" style="left:1228px;top:273px" width="10" height="7"><path d="M1 1.5 L5 5.5 L9 1.5" fill="none" stroke="#444" stroke-width="1.8"/></svg>
<div class="t" style="left:1147px;top:273px;font-family:'Liberation Serif',serif;font-weight:bold;font-size:11px;line-height:11px;color:#8a8a8a">T</div>
<div class="t" style="left:1152.5px;top:267px;font-family:'Liberation Serif',serif;font-weight:bold;font-size:17px;line-height:17px;color:#222">T</div>
<div class="a" style="left:1271px;top:265px;width:56px;height:20px;background:#fff;border:1px solid #b4b4b4;border-top-color:#9a9a9a"></div>
<div class="a" style="left:1326px;top:265px;width:10px;height:20px;background:#dcdcdc;border:1px solid #b4b4b4"></div>
<div class="t" style="left:1276.5px;top:268px;font-size:10.5px;line-height:13px;transform-origin:0 0;transform:scaleX(1.0772);color:#1e1e1e">(Auto)</div>
<svg class="a" style="left:1250px;top:265px" width="14" height="19"><g fill="none" stroke="#222" stroke-width="1.1"><path d="M4 7.5L7 1L10 7.5M5 5.5H9M1 7.8H13M6 17L8.5 10L11 17M7 15H10M1 18.2H13M3.5 10V17"/></g><path d="M3.5 9L2 11H5ZM3.5 18L2 16H5Z" fill="#222"/></svg>
<div class="a" style="left:1169px;top:289px;width:56px;height:20px;background:#d2d2d2;border:1px solid #b4b4b4;border-top-color:#9a9a9a"></div>
<div class="a" style="left:1224px;top:289px;width:18px;height:20px;background:#dcdcdc;border:1px solid #b4b4b4"></div>
<svg class="a" style="left:1228px;top:297px" width="10" height="7"><path d="M1 1.5 L5 5.5 L9 1.5" fill="none" stroke="#444" stroke-width="1.8"/></svg>
<svg class="a" style="left:1146px;top:288px" width="17" height="17"><g fill="none" stroke="#333" stroke-width="1.2"><path d="M1 12L3.8 4L6.6 12M2 9.5H5.6M9 4L11.8 12L14.6 4M8 2V15"/></g><path d="M8 0.5L6.5 3H9.5ZM8 16.5L6.5 14H9.5Z" fill="#333"/></svg>
<svg class="a" style="left:1248px;top:291px" width="18" height="15"><rect x="0" y="0" width="18" height="9" fill="#9e9e9e"/><g fill="none" stroke="#222" stroke-width="1.1"><path d="M1.5 8.5L4.5 1L7.5 8.5M2.5 6H6.5M10 1L13 8.5L16 1M2 12.5H16"/></g><path d="M0.5 12.5L3 10.5V14.5ZM17.5 12.5L15 10.5V14.5Z" fill="#222"/></svg>
<div class="a" style="left:1271px;top:289px;width:56px;height:20px;background:#fff;border:1px solid #b4b4b4;border-top-color:#9a9a9a"></div>
<div class="a" style="left:1326px;top:289px;width:10px;height:20px;background:#dcdcdc;border:1px solid #b4b4b4"></div>
<div class="t" style="left:1276.5px;top:292px;font-size:10.5px;line-height:13px;transform-origin:0 0;transform:scaleX(1.0610);color:#1e1e1e">0</div>
<div class="a" style="left:1142px;top:311px;width:190px;height:1px;background:#a4a4a4"></div><div class="a" style="left:1142px;top:312px;width:190px;height:1px;background:#ececec"></div>
<div class="a" style="left:1169px;top:316px;width:56px;height:18px;background:#fff;border:1px solid #b4b4b4;border-top-color:#9a9a9a"></div>
<div class="t" style="left:1175px;top:319px;font-size:10.5px;line-height:13px;transform-origin:0 0;transform:scaleX(0.9271);color:#1e1e1e">100%</div>
<svg class="a" style="left:1145px;top:318px" width="6" height="15"><path d="M3 2V13" stroke="#222" stroke-width="1.2"/><path d="M3 0.5L0.8 3.5H5.2ZM3 14.5L0.8 11.5H5.2Z" fill="#222"/></svg>
<div class="t" style="left:1152px;top:316px;font-family:'Liberation Serif',serif;font-weight:bold;font-size:17px;line-height:17px;color:#222">T</div>
<div class="a" style="left:1271px;top:316px;width:56px;height:18px;background:#fff;border:1px solid #b4b4b4;border-top-color:#9a9a9a"></div>
<div class="t" style="left:1277px;top:319px;font-size:10.5px;line-height:13px;transform-origin:0 0;transform:scaleX(0.9382);color:#1e1e1e">100%</div>
<div class="t" style="left:1249.5px;top:315px;font-family:'Liberation Serif',serif;font-weight:bold;font-size:16px;line-height:17px;color:#111;transform:scaleX(1.4);transform-origin:0 0">T</div>
<svg class="a" style="left:1248px;top:328px" width="18" height="6"><path d="M1 3H17" stroke="#222" stroke-width="1.2"/><path d="M0 3L3.5 0.5V5.5ZM18 3L14.5 0.5V5.5Z" fill="#222"/></svg>
<div class="a" style="left:1169px;top:338px;width:56px;height:17px;background:#fff;border:1px solid #b4b4b4;border-top-color:#9a9a9a"></div>
<div class="t" style="left:1174.5px;top:341px;font-size:10.5px;line-height:13px;transform-origin:0 0;transform:scaleX(1.0277);color:#1e1e1e">0 pt</div>
<svg class="a" style="left:1147px;top:338px" width="15" height="15"><g fill="none" stroke="#333" stroke-width="1.1"><path d="M1 10L3.5 3L6 10M1.8 8H5.2M0.5 12.5H7M11 8V14.5"/></g><path d="M11 6.5L9 9.5H13Z" fill="#333"/><text x="8.5" y="6.5" font-size="8" font-family="Liberation Sans" fill="#333">a</text></svg>
<div class="t" style="left:1241px;top:340px;font-size:10.5px;line-height:13px;transform-origin:0 0;transform:scaleX(1.0209);color:#1e1e1e">Color:</div>
<div class="a" style="left:1272px;top:339px;width:54px;height:15px;background:#000;border:1px solid #555"></div>
<div class="a" style="left:1142px;top:358px;width:190px;height:1px;background:#a4a4a4"></div><div class="a" style="left:1142px;top:359px;width:190px;height:1px;background:#ececec"></div>
<div class="a" style="left:1150px;top:364px;width:20px;height:20px;background:#a9c4e4;border:1px solid #6f9fd8"></div>
<div class="t" style="left:1156px;top:366px;font-size:15px;line-height:16px;color:#222;font-family:'Liberation Serif',serif;font-weight:bold">T</div>
<div class="t" style="left:1175px;top:366px;font-size:15px;line-height:16px;color:#222;font-family:'Liberation Serif',serif;font-weight:bold"><i>T</i></div>
<div class="t" style="left:1201px;top:366px;font-size:15px;line-height:16px;color:#222;font-family:'Liberation Serif',serif;font-weight:bold">TT</div>
<div class="t" style="left:1224px;top:366px;font-size:15px;line-height:16px;color:#222;font-family:'Liberation Serif',serif;font-weight:bold">T<span style="font-size:11px">r</span></div>
<div class="t" style="left:1247px;top:366px;font-size:15px;line-height:16px;color:#222;font-family:'Liberation Serif',serif;font-weight:bold">T</div>
<div class="t" style="left:1268px;top:366px;font-size:15px;line-height:16px;color:#222;font-family:'Liberation Serif',serif;font-weight:bold">T</div>
<div class="t" style="left:1298.5px;top:366px;font-size:15px;line-height:16px;color:#222;font-family:'Liberation Serif',serif;font-weight:bold"><u>T</u></div>
<div class="t" style="left:1320.5px;top:366px;font-size:15px;line-height:16px;color:#222;font-family:'Liberation Serif',serif;font-weight:bold"><s>T</s></div>
<div class="t" style="left:1257px;top:364px;font-size:8px;line-height:10px;color:#222;font-family:'Liberation Serif',serif;font-weight:bold">1</div>
<div class="t" style="left:1278px;top:373px;font-size:8px;line-height:10px;color:#222;font-family:'Liberation Serif',serif;font-weight:bold">1</div>
<div class="a" style="left:1142px;top:388px;width:190px;height:1px;background:#a4a4a4"></div><div class="a" style="left:1142px;top:389px;width:190px;height:1px;background:#ececec"></div>
<div class="a" style="left:1142px;top:397px;width:104px;height:18px;background:#fff;border:1px solid #b4b4b4;border-top-color:#9a9a9a"></div>
<div class="t" style="left:1145px;top:400px;font-size:10.5px;line-height:13px;transform-origin:0 0;transform:scaleX(0.9552);color:#1e1e1e">English: UK</div>
<svg class="a" style="left:1233px;top:403px" width="10" height="7"><path d="M1 1.5 L5 5.5 L9 1.5" fill="none" stroke="#444" stroke-width="1.8"/></svg>
<div class="t" style="left:1256.5px;top:395px;font-family:'Liberation Serif',serif;font-size:12px;color:#333">a</div>
<div class="t" style="left:1263px;top:399px;font-family:'Liberation Serif',serif;font-size:14px;color:#333">a</div>
<div class="a" style="left:1272px;top:397px;width:58px;height:18px;background:#fff;border:1px solid #b4b4b4;border-top-color:#9a9a9a"></div>
<div class="t" style="left:1275.5px;top:400px;font-size:10.5px;line-height:13px;transform-origin:0 0;transform:scaleX(0.9953);color:#1e1e1e">Sharp</div>
<svg class="a" style="left:1317px;top:403px" width="10" height="7"><path d="M1 1.5 L5 5.5 L9 1.5" fill="none" stroke="#444" stroke-width="1.8"/></svg><div class="a" style="left:1142px;top:447px;width:116px;height:19px;background:#fff;border:1px solid #b4b4b4;border-top-color:#9a9a9a"></div>
<div class="t" style="left:1146px;top:451px;font-size:10.5px;line-height:13px;transform-origin:0 0;transform:scaleX(0.9544);color:#1e1e1e">Normal</div>
<svg class="a" style="left:1243px;top:454px" width="10" height="7"><path d="M1 1.5 L5 5.5 L9 1.5" fill="none" stroke="#444" stroke-width="1.8"/></svg>
<div class="t" style="left:1262px;top:450px;font-size:10.5px;line-height:13px;transform-origin:0 0;transform:scaleX(0.9996);color:#1e1e1e">Opacity:</div>
<div class="a" style="left:1303px;top:447px;width:40px;height:19px;background:#fff;border:1px solid #b4b4b4;border-top-color:#9a9a9a"></div>
<div class="t" style="left:1308px;top:451px;font-size:10.5px;color:#1e1e1e;">100%</div>
<div class="a" style="left:1138px;top:469px;width:194px;height:1px;background:#bdbdbd"></div><div class="a" style="left:1138px;top:470px;width:194px;height:1px;background:#e8e8e8"></div>
<div class="t" style="left:1143px;top:476px;font-size:10.5px;line-height:13px;transform-origin:0 0;transform:scaleX(1.0133);color:#1e1e1e">Unify:</div>
<svg class="a" style="left:1181px;top:475px" width="10" height="13"><circle cx="3" cy="3" r="1.8" fill="none" stroke="#444" stroke-width="1"/><path d="M3 5V8" stroke="#444"/><rect x="2.5" y="7.5" width="7" height="5" fill="#f2f2f2" stroke="#444"/><path d="M4 10H8" stroke="#444"/></svg>
<svg class="a" style="left:1199px;top:475px" width="10" height="13"><circle cx="3" cy="3" r="1.8" fill="none" stroke="#444" stroke-width="1"/><path d="M3 5V8" stroke="#444"/><rect x="2.5" y="7.5" width="7" height="5" fill="#f2f2f2" stroke="#444"/><path d="M4 10H8" stroke="#444"/></svg>
<svg class="a" style="left:1217px;top:475px" width="10" height="13"><circle cx="3" cy="3" r="1.8" fill="none" stroke="#444" stroke-width="1"/><path d="M3 5V8" stroke="#444"/><rect x="2.5" y="7.5" width="7" height="5" fill="#f2f2f2" stroke="#444"/><path d="M4 10H8" stroke="#444"/></svg>
<div class="a" style="left:1257px;top:476px;width:10px;height:10px;border:1px solid #777;background:#fff"></div>
<div class="t" style="left:1258px;top:473px;font-size:11px;color:#111;">&#10003;</div>
<div class="t" style="left:1270px;top:476px;font-size:10.5px;color:#1e1e1e;">Propagate Frame 1</div>
<div class="a" style="left:1138px;top:494px;width:194px;height:1px;background:#bdbdbd"></div><div class="a" style="left:1138px;top:495px;width:194px;height:1px;background:#e8e8e8"></div>
<div class="t" style="left:1146px;top:502px;font-size:10.5px;line-height:13px;transform-origin:0 0;transform:scaleX(1.0235);color:#1e1e1e">Lock:</div>
<div class="a chk" style="left:1178px;top:502px;width:11px;height:11px;border:1px solid #666;background-size:6px 6px"></div>
<svg class="a" style="left:1195px;top:501px" width="14" height="14"><path d="M7 7L13 1" stroke="#555" stroke-width="1.3"/><path d="M1 13C3 13 5 11.5 5.5 10C6 8.5 7.5 8 8.5 8.5C8.5 10.5 6 13 1 13Z" fill="#444"/></svg>
<svg class="a" style="left:1213px;top:500px" width="14" height="14"><path d="M7 1V13M1 7H13" stroke="#222" stroke-width="1.6"/><path d="M7 0L4.5 3H9.5ZM7 14L4.5 11H9.5ZM0 7L3 4.5V9.5ZM14 7L11 4.5V9.5Z" fill="#222"/></svg>
<svg class="a" style="left:1232px;top:501px" width="11" height="12"><path d="M2.5 6V4A3 3 0 0 1 8.5 4V6" fill="none" stroke="#333" stroke-width="1.5"/><rect x="0.5" y="6" width="10" height="6" fill="#333"/></svg>
<div class="t" style="left:1285px;top:502px;font-size:10.5px;line-height:13px;transform-origin:0 0;transform:scaleX(0.9117);color:#1e1e1e">Fill:</div>
<div class="a" style="left:1303px;top:499px;width:40px;height:19px;background:#fff;border:1px solid #b4b4b4;border-top-color:#9a9a9a"></div>
<div class="t" style="left:1308px;top:503px;font-size:10.5px;color:#1e1e1e;">100%</div>
<div class="a" style="left:1138px;top:518px;width:194px;height:1px;background:#a8a8a8"></div><div class="a" style="left:1138px;top:519px;width:194px;height:1px;background:#e0e0e0"></div>
<div class="a" style="left:1138px;top:520px;width:24px;height:26px;background:#d6d6d6"></div>
<div class="a" style="left:1142px;top:523px;width:18px;height:20px;border:1px solid #bdbdbd;border-right-color:#eee;border-bottom-color:#eee"></div>
<svg class="a" style="left:1144px;top:528px" width="14" height="9"><path d="M1 4.5 C4 0 10 0 13 4.5 C10 9 4 9 1 4.5Z" fill="#fff" stroke="#222" stroke-width="1.2"/><circle cx="7" cy="4.5" r="2.6" fill="#111"/></svg>
<div class="a" style="left:1162px;top:520px;width:170px;height:26px;background:#3393f5"></div>
<div class="a" style="left:1164px;top:522px;width:36px;height:23px;background:#fff;border:1px solid #000"></div>
<svg class="a" style="left:1164px;top:522px" width="36" height="23"><path d="M0 4V0H5M31 0H36V4M36 19V23H31M5 23H0V19" fill="none" stroke="#000" stroke-width="2.5"/></svg>
<div class="a chk" style="left:1167px;top:525px;width:30px;height:17px;background-size:8px 8px"></div>
<svg class="a" style="left:1167px;top:525px" width="30" height="17"><path d="M12 4L15 2L18 4M11 7L14 9M17 6L19 9M13 12L17 12M12 14L18 15" fill="none" stroke="#555" stroke-width="0.8"/></svg>
<div class="t" style="left:1206px;top:528px;font-size:11px;font-weight:bold;line-height:13px;transform-origin:0 0;transform:scaleX(0.9992);color:#fff">Layer 1</div>
<div class="a" style="left:1138px;top:546px;width:194px;height:1px;background:#b8b8b8"></div><div class="a" style="left:1138px;top:547px;width:194px;height:1px;background:#d6d6d6"></div>
<div class="a" style="left:1142px;top:550px;width:18px;height:20px;border:1px solid #bdbdbd;border-right-color:#eee;border-bottom-color:#eee"></div>
<div class="a" style="left:1162px;top:547px;width:1px;height:26px;background:#bcbcbc"></div>
<div class="a" style="left:1165px;top:550px;width:33px;height:19px;background:#111;padding:1px"><div style="width:31px;height:17px;background:linear-gradient(90deg,#bfc0c4,#d2d3d6 60%,#c6c7ca)"></div></div>
<svg class="a" style="left:1166px;top:551px" width="31" height="17"><path d="M9 17C9 13 12 12 15 12C19 12 22 13 23 17Z" fill="#2b3550"/><path d="M13 12L16 15L18 12Z" fill="#dfe4ee"/><ellipse cx="16" cy="8" rx="3.6" ry="4.5" fill="#b88873"/><path d="M12 6C12 2 14 1.5 16 1.5C19 1.5 20.5 3 20 6.5L19 4.5C17 4 14 4 13 5.5Z" fill="#1e1e1e"/></svg>
<div class="t" style="left:1206.5px;top:554px;font-size:11px;font-style:italic;line-height:13px;transform-origin:0 0;transform:scaleX(0.9741);color:#1e1e1e">Background</div>
<svg class="a" style="left:1318px;top:554px" width="11" height="12"><path d="M2.5 6V4A3 3 0 0 1 8.5 4V6" fill="none" stroke="#444" stroke-width="1.3"/><rect x="1" y="6" width="9" height="6" fill="#f4f4f4" stroke="#444"/></svg>
<div class="a" style="left:1138px;top:573px;width:194px;height:1px;background:#a8a8a8"></div><div class="a" style="left:1138px;top:574px;width:194px;height:1px;background:#e0e0e0"></div><div class="a" style="left:42px;top:606px;width:1059px;height:1px;background:#3e3e3e"></div>
<div class="a" style="left:42px;top:607px;width:1059px;height:18px;background:linear-gradient(#9c9c9c,#8c8c8c);border-bottom:1px solid #bcbcbc"></div>
<div class="a" style="left:42px;top:607px;width:125px;height:19px;background:linear-gradient(#ececec,#d6d6d6)"></div>
<div class="t" style="left:49.1px;top:611px;font-size:9.5px;font-weight:bold;line-height:12px;transform-origin:0 0;transform:scaleX(1.0792);color:#3a4350">ANIMATION (FRAMES)</div>
<div class="a" style="left:167px;top:608px;width:114px;height:17px;background:linear-gradient(#a8a8a8,#8f8f8f);border-right:1px solid #777"></div>
<div class="t" style="left:174.6px;top:611px;font-size:9.5px;font-weight:bold;line-height:12px;transform-origin:0 0;transform:scaleX(1.0057);color:#333">MEASUREMENT LOG</div>
<div class="a" style="left:42px;top:625px;width:1059px;height:55px;background:#d6d6d6"></div>
<div class="a" style="left:44px;top:626px;width:66px;height:54px;background:#3d97f0"></div>
<div class="a" style="left:47px;top:629px;width:60px;height:51px;background:#d0d0d0;border:1px solid #fff"></div>
<div class="a" style="left:50px;top:631px;width:11px;height:12px;background:#e8e8e8;border:1px solid #aaa"></div>
<div class="t" style="left:52px;top:631px;font-size:10px;color:#000;font-weight:bold">1</div>
<div class="a chk" style="left:50px;top:644px;width:54px;height:32px;background-size:12px 12px"></div>
<svg class="a" style="left:50px;top:644px" width="54" height="32"><g fill="none" stroke="#666" stroke-width="0.6"><path d="M22 2C24 0 30 0 32 3M21 5C21 10 22 14 24 16C26 18 30 18 32 15M24 8L27 8M29 8L31 8M25 12C27 13 29 13 30 12M18 18C20 17 22 17 23 18M23 18L21 26M26 19L27 27M31 16L24 24M30 18L33 28M28 26L32 25"/></g></svg>
<div class="a" style="left:1087px;top:613px;width:10px;height:6px;border-top:1px solid #444;border-bottom:1px solid #444"></div>
<svg class="a" style="left:0;top:0" width="1332" height="680" viewBox="0 0 1332 680"><g fill="none" stroke="#000" stroke-width="3.6" stroke-linecap="round" stroke-linejoin="round">
<path d="M1145.7 670.2 C1144.3 669.9 1142.7 670.5 1137.6 668.6 C1132.5 666.7 1119.0 662.0 1115.0 659.0 C1111.0 656.0 1115.9 655.3 1113.4 650.8 C1110.9 646.3 1103.5 635.8 1100.0 632.0 C1096.5 628.2 1095.7 631.5 1092.3 628.2 C1088.9 624.9 1083.5 617.9 1079.4 612.0 C1075.4 606.1 1070.4 599.1 1068.0 592.6 C1065.6 586.1 1064.6 579.1 1064.9 573.2 C1065.2 567.3 1066.8 561.9 1069.7 557.0 C1072.7 552.1 1076.7 548.6 1082.6 544.0 C1088.5 539.4 1096.7 534.6 1105.3 529.5 C1113.9 524.4 1124.2 518.5 1134.4 513.4 C1144.6 508.3 1155.9 503.6 1166.7 498.8 C1177.5 494.0 1189.8 488.0 1199.0 484.3 C1208.2 480.6 1213.9 477.4 1221.7 476.5 C1229.5 475.6 1238.6 478.1 1246.0 479.0 C1253.4 479.9 1258.5 479.3 1266.0 482.0 C1273.5 484.7 1283.2 490.1 1290.8 495.3 C1298.4 500.5 1305.5 507.1 1311.4 513.0 C1317.3 518.9 1322.8 524.8 1326.0 530.6 C1329.2 536.4 1329.8 542.3 1330.5 548.0 C1331.2 553.7 1330.8 560.0 1330.0 565.0 C1329.2 570.0 1328.8 573.5 1326.0 578.0 C1323.2 582.5 1316.9 588.2 1313.0 592.0 C1309.1 595.8 1307.5 597.0 1302.8 601.0 C1298.1 605.0 1290.8 612.5 1285.0 616.0 C1279.2 619.5 1273.8 620.2 1268.0 622.0 C1262.2 623.8 1258.2 625.7 1250.0 627.0 C1241.8 628.3 1230.2 629.8 1218.5 630.0 C1206.8 630.2 1192.1 630.8 1180.0 628.0 C1167.9 625.2 1155.3 618.0 1146.0 613.0 C1136.7 608.0 1129.8 603.2 1124.0 598.0 C1118.2 592.8 1113.5 587.8 1111.5 582.0 C1109.5 576.2 1110.6 569.3 1111.7 563.0 C1112.8 556.7 1116.5 550.0 1118.2 544.0 C1119.9 538.0 1120.4 532.7 1122.0 527.0 C1123.6 521.3 1124.3 514.2 1128.0 510.0 C1131.7 505.8 1136.6 505.8 1144.1 502.0 C1151.6 498.2 1164.6 491.5 1173.2 487.5 C1181.8 483.5 1188.8 480.1 1195.8 477.8 C1202.8 475.6 1211.8 474.6 1215.0 474.0"/>
<path d="M1215.0 474.0 C1212.3 473.0 1208.7 469.1 1199.0 468.0 C1189.3 466.9 1169.4 465.6 1157.0 467.5 C1144.6 469.4 1133.9 474.2 1124.7 479.4 C1115.5 484.6 1108.0 492.3 1102.0 498.8 C1096.0 505.3 1092.5 510.7 1089.0 518.2 C1085.5 525.7 1082.6 533.2 1081.0 544.0 C1079.4 554.8 1078.3 571.0 1079.4 582.9 C1080.5 594.8 1083.2 606.3 1087.5 615.2 C1091.8 624.1 1099.1 630.9 1105.3 636.3 C1111.5 641.7 1116.1 645.2 1124.7 647.6 C1133.3 650.0 1145.2 650.8 1157.0 650.8 C1168.8 650.8 1183.3 649.9 1195.8 647.6 C1208.3 645.3 1223.0 639.4 1232.0 637.0 C1241.0 634.6 1243.5 635.0 1250.0 633.0 C1256.5 631.0 1263.3 627.5 1271.0 625.0 C1278.7 622.5 1289.5 620.9 1296.0 618.0 C1302.5 615.1 1307.2 610.8 1310.0 607.5 C1312.8 604.2 1312.4 603.0 1313.0 598.0 C1313.6 593.0 1313.8 585.9 1313.8 577.6 C1313.8 569.3 1313.8 556.3 1312.9 548.0 C1312.0 539.7 1310.2 534.4 1308.5 527.6 C1306.8 520.8 1306.5 512.6 1302.6 507.0 C1298.7 501.4 1291.9 497.2 1285.0 493.8 C1278.1 490.4 1270.2 489.2 1261.4 486.5 C1252.6 483.8 1242.4 480.5 1232.0 477.6 C1221.6 474.7 1211.0 470.3 1199.0 469.0 C1187.0 467.7 1166.5 469.8 1160.0 470.0"/>
</g></svg>
</body></html>
